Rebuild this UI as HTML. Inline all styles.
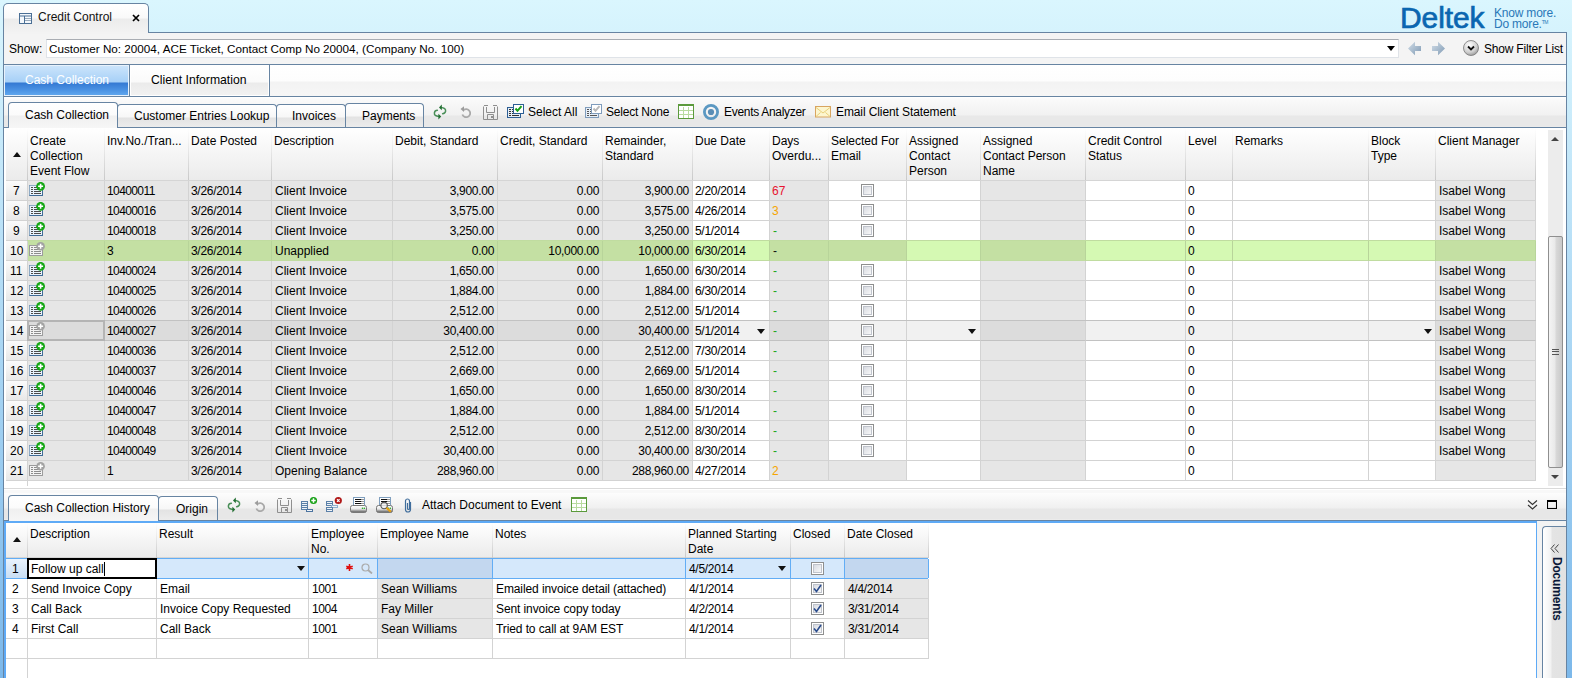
<!DOCTYPE html><html><head><meta charset="utf-8"><style>
html,body{margin:0;padding:0;}
body{width:1572px;height:678px;overflow:hidden;position:relative;font-family:"Liberation Sans",sans-serif;font-size:12px;color:#000;
background:linear-gradient(to bottom,#daf6fe 0px,#7cb8ea 678px);}
.t{position:absolute;white-space:nowrap;line-height:14px;height:14px;}
div{box-sizing:border-box;}
</style></head><body>
<div style="position:absolute;left:3px;top:3px;width:146px;height:31px;border:1px solid #6784a2;border-bottom:none;border-radius:5px 5px 0 0;background:linear-gradient(to bottom,#ffffff 0px,#f9f9f9 14px,#ececec 15px,#f3f3f3 29px);"></div>
<svg style="position:absolute;left:19px;top:13px" width="13" height="11" viewBox="0 0 13 11"><rect x="0.5" y="0.5" width="12" height="10" fill="#f4f8fc" stroke="#4a6f95"/><line x1="1" y1="3" x2="12" y2="3" stroke="#4a6f95"/><line x1="5.5" y1="3" x2="5.5" y2="10" stroke="#4a6f95"/><line x1="6" y1="5.5" x2="12" y2="5.5" stroke="#9ab"/><line x1="6" y1="7.5" x2="12" y2="7.5" stroke="#9ab"/></svg>
<div class="t" style="left:38px;top:10px;font-size:12px;color:#111">Credit Control</div>
<svg style="position:absolute;left:132px;top:14px" width="8" height="8" viewBox="0 0 8 8"><path d="M1 1L7 7M7 1L1 7" stroke="#000" stroke-width="1.7"/></svg>
<div class="t" style="left:1400px;top:1px;font-size:30px;line-height:34px;height:34px;color:#0b66b0;letter-spacing:-0.1px;font-weight:normal;-webkit-text-stroke:0.7px #0b66b0;">Deltek</div>
<div class="t" style="left:1494px;top:7px;font-size:12px;line-height:12px;height:12px;color:#2a78b8;letter-spacing:-0.2px">Know more.</div>
<div class="t" style="left:1494px;top:18px;font-size:12px;line-height:12px;height:12px;color:#2a78b8;letter-spacing:-0.2px">Do more.<span style="font-size:5px;letter-spacing:-0.5px;vertical-align:top;line-height:8px">TM</span></div>
<div style="position:absolute;left:3px;top:32px;width:1564px;height:660px;border:1px solid #6784a2;border-bottom:none;background:#f4f4f4;"></div>
<div style="position:absolute;left:4px;top:32px;width:144px;height:2px;background:#f3f3f3;"></div>
<div class="t" style="left:9px;top:42px;">Show:</div>
<div style="position:absolute;left:46px;top:39px;width:1353px;height:19px;background:#fff;border:1px solid #dfe3e8;border-top-color:#a9adb3;"></div>
<div class="t" style="left:49px;top:42px;font-size:11.7px">Customer No: 20004, ACE Ticket, Contact Comp No 20004, (Company No. 100)</div>
<svg style="position:absolute;left:1387px;top:46px" width="8" height="5"><path d="M0 0H8L4 5Z" fill="#000"/></svg>
<svg style="position:absolute;left:1408px;top:41px" width="14" height="15" viewBox="0 0 14 15"><defs><linearGradient id="ga" x1="0" y1="0" x2="1" y2="1"><stop offset="0" stop-color="#d3dee8"/><stop offset="1" stop-color="#7f9ab4"/></linearGradient></defs><path d="M0 7.5L7 0.7V5H13V10H7V14.3Z" fill="url(#ga)"/></svg>
<svg style="position:absolute;left:1431px;top:41px" width="14" height="15" viewBox="0 0 14 15"><path d="M14 7.5L7 0.7V5H1V10H7V14.3Z" fill="url(#ga)"/></svg>
<svg style="position:absolute;left:1463px;top:40px" width="17" height="17" viewBox="0 0 17 17"><defs><radialGradient id="gc" cx="0.4" cy="0.3" r="0.8"><stop offset="0" stop-color="#ffffff"/><stop offset="0.6" stop-color="#d0d0d0"/><stop offset="1" stop-color="#8a8a8a"/></radialGradient></defs><circle cx="8" cy="8" r="7.5" fill="url(#gc)" stroke="#777" stroke-width="0.8"/><path d="M5 6.5L8 9.5L11 6.5" fill="none" stroke="#111" stroke-width="1.8"/></svg>
<div class="t" style="left:1484px;top:42px;letter-spacing:-0.2px">Show Filter List</div>
<div style="position:absolute;left:4px;top:64px;width:1562px;height:1px;background:#6784a2;"></div>
<div style="position:absolute;left:4px;top:65px;width:1562px;height:31px;background:linear-gradient(to bottom,#ffffff 0px,#fdfdfd 16px,#f3f3f3 17px,#f6f6f6 30px);"></div>
<div style="position:absolute;left:4px;top:65px;width:125px;height:31px;background:linear-gradient(to bottom,#cbe4fb 0px,#a6d0f7 16px,#3479d3 17px,#4a92e3 24px,#62aaf0 30px);border:1px solid #e8f2fc;"></div>
<div class="t" style="left:25px;top:73px;color:#fff">Cash Collection</div>
<div style="position:absolute;left:129px;top:65px;width:1px;height:31px;background:#6784a2;"></div>
<div style="position:absolute;left:130px;top:65px;width:139px;height:31px;background:linear-gradient(to bottom,#ffffff 0px,#fafafa 16px,#ebebeb 17px,#f2f2f2 30px);border:1px solid #fff;"></div>
<div class="t" style="left:151px;top:73px;font-size:12.2px">Client Information</div>
<div style="position:absolute;left:269px;top:65px;width:1px;height:31px;background:#6784a2;"></div>
<div style="position:absolute;left:4px;top:96px;width:1562px;height:1px;background:#6784a2;"></div>
<div style="position:absolute;left:4px;top:97px;width:1562px;height:30px;background:linear-gradient(to bottom,#ffffff 0px,#fafafa 2px,#f1f1f1 18px,#e8e8e8 19px,#e8e8e8 29px,#ececec 30px);"></div>
<div style="position:absolute;left:4px;top:127px;width:1562px;height:1px;background:#6784a2;"></div>
<div style="position:absolute;left:345px;top:103px;width:79px;height:24px;border:1px solid #6784a2;border-bottom:none;border-radius:4px 4px 0 0;background:linear-gradient(to bottom,#ffffff 0px,#f7f7f7 12px,#e3e3e3 13px,#ececec 100%);"></div>
<div class="t" style="left:362px;top:109px;">Payments</div>
<div style="position:absolute;left:276px;top:104px;width:70px;height:23px;border:1px solid #6784a2;border-bottom:none;border-radius:4px 4px 0 0;background:linear-gradient(to bottom,#ffffff 0px,#f7f7f7 12px,#e3e3e3 13px,#ececec 100%);"></div>
<div class="t" style="left:292px;top:109px;">Invoices</div>
<div style="position:absolute;left:117px;top:104px;width:160px;height:23px;border:1px solid #6784a2;border-bottom:none;border-radius:4px 4px 0 0;background:linear-gradient(to bottom,#ffffff 0px,#f7f7f7 12px,#e3e3e3 13px,#ececec 100%);"></div>
<div class="t" style="left:134px;top:109px;">Customer Entries Lookup</div>
<div style="position:absolute;left:8px;top:102px;width:110px;height:26px;border:1px solid #6784a2;border-bottom:none;border-radius:4px 4px 0 0;background:linear-gradient(to bottom,#ffffff 0px,#fbfbfb 12px,#f0f0f0 13px,#f6f6f6 100%);"></div>
<div class="t" style="left:25px;top:108px;">Cash Collection</div>
<svg style="position:absolute;left:430px;top:102px" width="20" height="20" viewBox="0 0 20 20"><g fill="none" stroke="#2a7d3c" stroke-width="1.5" stroke-linecap="round"><path d="M11 5.5 Q16 5.8 15.6 9.2 Q15.2 11.6 12.6 11.7" stroke-opacity="0.85"/><path d="M9 14.5 Q4 14.2 4.4 10.8 Q4.8 8.4 7.4 8.3" stroke-opacity="0.85"/></g><path d="M9 5.4L11.8 2.6V8.2Z" fill="#236f33"/><path d="M11.2 14.6L8.4 11.8V17.4Z" fill="#236f33"/></svg>
<svg style="position:absolute;left:460px;top:106px" width="11" height="12" viewBox="0 0 11 12"><path d="M3.5 4.2 A4 4 0 1 1 2.4 8.5" fill="none" stroke="#a9a9a9" stroke-width="1.8"/><path d="M0.5 3L4 0.3V6Z" fill="#9c9c9c"/></svg>
<svg style="position:absolute;left:483px;top:105px" width="16" height="16" viewBox="0 0 16 16"><g fill="none" stroke="#8f8f8f" stroke-width="1"><path d="M0.5 1.5V14.5H14.5V1.5"/><path d="M1 0.5H5M10 0.5H14"/><path d="M3.5 2V7.5H11.5V2"/><path d="M4.5 14V9.5H10.5V14"/></g><rect x="8" y="11" width="2" height="2" fill="#8f8f8f"/></svg>
<svg style="position:absolute;left:507px;top:104px" width="17" height="15" viewBox="0 0 17 15"><rect x="0.5" y="3.5" width="13" height="10" fill="#e6eef7" stroke="#2d5f94"/><g stroke="#333" stroke-width="1"><path d="M2 5.5H4M2 7.5H4M2 9.5H4M2 11.5H4M5 5.5H12M5 7.5H12M5 9.5H12M5 11.5H12"/></g><rect x="6.5" y="0.5" width="10" height="9" fill="#fff" stroke="#2d5f94"/><path d="M8.5 4.5L10.5 6.8L14.5 2.2" fill="none" stroke="#17a017" stroke-width="2"/></svg>
<div class="t" style="left:528px;top:105px;">Select All</div>
<svg style="position:absolute;left:585px;top:104px" width="17" height="15" viewBox="0 0 17 15"><rect x="0.5" y="3.5" width="13" height="10" fill="#e6eef7" stroke="#7f9cbc"/><g stroke="#555" stroke-width="1"><path d="M2 5.5H4M2 7.5H4M2 9.5H4M2 11.5H4M5 5.5H12M5 7.5H12M5 9.5H12M5 11.5H12"/></g><rect x="6.5" y="0.5" width="10" height="9" fill="#fff" stroke="#7f9cbc"/><path d="M8.5 4.5L10.5 6.8L14.5 2.2" fill="none" stroke="#b9b9b9" stroke-width="2"/></svg>
<div class="t" style="left:606px;top:105px;letter-spacing:-0.2px">Select None</div>
<svg style="position:absolute;left:678px;top:104px" width="16" height="15" viewBox="0 0 16 15"><rect x="0.5" y="0.5" width="15" height="14" fill="#fff" stroke="#5b9a3c"/><rect x="1" y="1" width="14" height="1" fill="#5b9a3c"/><g stroke="#b9dba0" stroke-width="1"><path d="M5.5 3V14M10.5 3V14M1 6.5H15M1 10.5H15"/></g></svg>
<svg style="position:absolute;left:703px;top:104px" width="16" height="16" viewBox="0 0 16 16"><circle cx="8" cy="8" r="6.6" fill="none" stroke="#5b98c2" stroke-width="2.8"/><circle cx="8" cy="8" r="3.1" fill="#5a8db5"/></svg>
<div class="t" style="left:724px;top:105px;letter-spacing:-0.3px">Events Analyzer</div>
<svg style="position:absolute;left:815px;top:106px" width="16" height="12" viewBox="0 0 16 12"><rect x="0.5" y="0.5" width="15" height="10.5" fill="#fdf6cf" stroke="#d8a560"/><path d="M1 1.5L8 7L15 1.5M1 10.5L5.5 6.5M15 10.5L10.5 6.5" fill="none" stroke="#e8cf7a" stroke-width="1"/></svg>
<div class="t" style="left:836px;top:105px;letter-spacing:-0.1px">Email Client Statement</div>
<div style="position:absolute;left:4px;top:128px;width:1562px;height:361px;background:#fff;"></div>
<div style="position:absolute;left:6px;top:128px;width:1530px;height:53px;background:linear-gradient(to bottom,#ffffff,#ebebeb);border-bottom:1px solid #d5d5d5;"></div>
<div style="position:absolute;left:27px;top:128px;width:1px;height:52px;background:linear-gradient(to bottom,#ffffff,#c9c9c9);"></div>
<div style="position:absolute;left:104px;top:128px;width:1px;height:52px;background:linear-gradient(to bottom,#ffffff,#c9c9c9);"></div>
<div style="position:absolute;left:188px;top:128px;width:1px;height:52px;background:linear-gradient(to bottom,#ffffff,#c9c9c9);"></div>
<div style="position:absolute;left:271px;top:128px;width:1px;height:52px;background:linear-gradient(to bottom,#ffffff,#c9c9c9);"></div>
<div style="position:absolute;left:392px;top:128px;width:1px;height:52px;background:linear-gradient(to bottom,#ffffff,#c9c9c9);"></div>
<div style="position:absolute;left:497px;top:128px;width:1px;height:52px;background:linear-gradient(to bottom,#ffffff,#c9c9c9);"></div>
<div style="position:absolute;left:602px;top:128px;width:1px;height:52px;background:linear-gradient(to bottom,#ffffff,#c9c9c9);"></div>
<div style="position:absolute;left:692px;top:128px;width:1px;height:52px;background:linear-gradient(to bottom,#ffffff,#c9c9c9);"></div>
<div style="position:absolute;left:769px;top:128px;width:1px;height:52px;background:linear-gradient(to bottom,#ffffff,#c9c9c9);"></div>
<div style="position:absolute;left:828px;top:128px;width:1px;height:52px;background:linear-gradient(to bottom,#ffffff,#c9c9c9);"></div>
<div style="position:absolute;left:906px;top:128px;width:1px;height:52px;background:linear-gradient(to bottom,#ffffff,#c9c9c9);"></div>
<div style="position:absolute;left:980px;top:128px;width:1px;height:52px;background:linear-gradient(to bottom,#ffffff,#c9c9c9);"></div>
<div style="position:absolute;left:1085px;top:128px;width:1px;height:52px;background:linear-gradient(to bottom,#ffffff,#c9c9c9);"></div>
<div style="position:absolute;left:1185px;top:128px;width:1px;height:52px;background:linear-gradient(to bottom,#ffffff,#c9c9c9);"></div>
<div style="position:absolute;left:1232px;top:128px;width:1px;height:52px;background:linear-gradient(to bottom,#ffffff,#c9c9c9);"></div>
<div style="position:absolute;left:1368px;top:128px;width:1px;height:52px;background:linear-gradient(to bottom,#ffffff,#c9c9c9);"></div>
<div style="position:absolute;left:1435px;top:128px;width:1px;height:52px;background:linear-gradient(to bottom,#ffffff,#c9c9c9);"></div>
<div style="position:absolute;left:1535px;top:128px;width:1px;height:52px;background:linear-gradient(to bottom,#ffffff,#c9c9c9);"></div>
<svg style="position:absolute;left:13px;top:152px" width="8" height="5" viewBox="0 0 8 5"><path d="M0 5L4 0L8 5Z" fill="#111"/></svg>
<div class="t" style="left:30px;top:134px;line-height:15px;height:45px">Create<br>Collection<br>Event Flow</div>
<div class="t" style="left:107px;top:134px;line-height:15px;height:45px">Inv.No./Tran...</div>
<div class="t" style="left:191px;top:134px;line-height:15px;height:45px">Date Posted</div>
<div class="t" style="left:274px;top:134px;line-height:15px;height:45px">Description</div>
<div class="t" style="left:395px;top:134px;line-height:15px;height:45px">Debit, Standard</div>
<div class="t" style="left:500px;top:134px;line-height:15px;height:45px">Credit, Standard</div>
<div class="t" style="left:605px;top:134px;line-height:15px;height:45px">Remainder,<br>Standard</div>
<div class="t" style="left:695px;top:134px;line-height:15px;height:45px">Due Date</div>
<div class="t" style="left:772px;top:134px;line-height:15px;height:45px">Days<br>Overdu...</div>
<div class="t" style="left:831px;top:134px;line-height:15px;height:45px">Selected For<br>Email</div>
<div class="t" style="left:909px;top:134px;line-height:15px;height:45px">Assigned<br>Contact<br>Person</div>
<div class="t" style="left:983px;top:134px;line-height:15px;height:45px">Assigned<br>Contact Person<br>Name</div>
<div class="t" style="left:1088px;top:134px;line-height:15px;height:45px">Credit Control<br>Status</div>
<div class="t" style="left:1188px;top:134px;line-height:15px;height:45px">Level</div>
<div class="t" style="left:1235px;top:134px;line-height:15px;height:45px">Remarks</div>
<div class="t" style="left:1371px;top:134px;line-height:15px;height:45px">Block<br>Type</div>
<div class="t" style="left:1438px;top:134px;line-height:15px;height:45px">Client Manager</div>
<div style="position:absolute;left:6px;top:181px;width:21px;height:20px;background:linear-gradient(to bottom,#fbfbfb,#e8e8e8);border-bottom:1px solid #d3d3d3;"></div>
<div style="position:absolute;left:27px;top:181px;width:1px;height:20px;background:#d3d3d3;"></div>
<div class="t" style="left:13px;top:184px;">7</div>
<div style="position:absolute;left:28px;top:181px;width:77px;height:20px;background:#e6e6e6;border-right:1px solid #d3d3d3;border-bottom:1px solid #d3d3d3;"></div>
<div style="position:absolute;left:105px;top:181px;width:84px;height:20px;background:#e6e6e6;border-right:1px solid #d3d3d3;border-bottom:1px solid #d3d3d3;"></div>
<div style="position:absolute;left:189px;top:181px;width:83px;height:20px;background:#e6e6e6;border-right:1px solid #d3d3d3;border-bottom:1px solid #d3d3d3;"></div>
<div style="position:absolute;left:272px;top:181px;width:121px;height:20px;background:#e6e6e6;border-right:1px solid #d3d3d3;border-bottom:1px solid #d3d3d3;"></div>
<div style="position:absolute;left:393px;top:181px;width:105px;height:20px;background:#e6e6e6;border-right:1px solid #d3d3d3;border-bottom:1px solid #d3d3d3;"></div>
<div style="position:absolute;left:498px;top:181px;width:105px;height:20px;background:#e6e6e6;border-right:1px solid #d3d3d3;border-bottom:1px solid #d3d3d3;"></div>
<div style="position:absolute;left:603px;top:181px;width:90px;height:20px;background:#e6e6e6;border-right:1px solid #d3d3d3;border-bottom:1px solid #d3d3d3;"></div>
<div style="position:absolute;left:693px;top:181px;width:77px;height:20px;background:#ffffff;border-right:1px solid #d3d3d3;border-bottom:1px solid #d3d3d3;"></div>
<div style="position:absolute;left:770px;top:181px;width:59px;height:20px;background:#e6e6e6;border-right:1px solid #d3d3d3;border-bottom:1px solid #d3d3d3;"></div>
<div style="position:absolute;left:829px;top:181px;width:78px;height:20px;background:#ffffff;border-right:1px solid #d3d3d3;border-bottom:1px solid #d3d3d3;"></div>
<div style="position:absolute;left:907px;top:181px;width:74px;height:20px;background:#ffffff;border-right:1px solid #d3d3d3;border-bottom:1px solid #d3d3d3;"></div>
<div style="position:absolute;left:981px;top:181px;width:105px;height:20px;background:#e6e6e6;border-right:1px solid #d3d3d3;border-bottom:1px solid #d3d3d3;"></div>
<div style="position:absolute;left:1086px;top:181px;width:100px;height:20px;background:#ffffff;border-right:1px solid #d3d3d3;border-bottom:1px solid #d3d3d3;"></div>
<div style="position:absolute;left:1186px;top:181px;width:47px;height:20px;background:#ffffff;border-right:1px solid #d3d3d3;border-bottom:1px solid #d3d3d3;"></div>
<div style="position:absolute;left:1233px;top:181px;width:136px;height:20px;background:#ffffff;border-right:1px solid #d3d3d3;border-bottom:1px solid #d3d3d3;"></div>
<div style="position:absolute;left:1369px;top:181px;width:67px;height:20px;background:#ffffff;border-right:1px solid #d3d3d3;border-bottom:1px solid #d3d3d3;"></div>
<div style="position:absolute;left:1436px;top:181px;width:100px;height:20px;background:#e6e6e6;border-right:1px solid #d3d3d3;border-bottom:1px solid #d3d3d3;"></div>
<svg style="position:absolute;left:29px;top:182px" width="17" height="15" viewBox="0 0 17 15"><rect x="0.5" y="3.5" width="13" height="10" fill="#e8f2fc" stroke="#3f6b95"/><path d="M0.5 13.5V3.5H13.5" fill="none" stroke="#8eaac4"/><g stroke="#4a4a4a"><path d="M2 5.5H4M2 7.5H4M2 9.5H4M2 11.5H4M5 5.5H12M5 7.5H12M5 9.5H12M5 11.5H12"/></g><circle cx="11.6" cy="4.3" r="4.4" fill="#13a713"/><path d="M11.6 1.8V6.8M9.1 4.3H14.1" stroke="#fff" stroke-width="1.6"/></svg>
<div class="t" style="left:107px;top:184px;letter-spacing:-0.6px">10400011</div>
<div class="t" style="left:191px;top:184px;letter-spacing:-0.3px">3/26/2014</div>
<div class="t" style="left:275px;top:184px;">Client Invoice</div>
<div class="t" style="right:1078px;top:184px;letter-spacing:-0.3px">3,900.00</div>
<div class="t" style="right:973px;top:184px;letter-spacing:-0.3px">0.00</div>
<div class="t" style="right:883px;top:184px;letter-spacing:-0.3px">3,900.00</div>
<div class="t" style="left:695px;top:184px;letter-spacing:-0.3px">2/20/2014</div>
<div class="t" style="left:772px;top:184px;color:#e8132f">67</div>
<div style="position:absolute;left:861px;top:184px;width:13px;height:13px;border:1px solid #8e8f8f;background:#fff;"><div style="position:absolute;left:1px;top:1px;width:9px;height:9px;border:1px solid #c0c4cc;background:linear-gradient(135deg,#d8dbe2,#f8f8f8);"></div></div>
<div class="t" style="left:1188px;top:184px;">0</div>
<div class="t" style="left:1439px;top:184px;">Isabel Wong</div>
<div style="position:absolute;left:6px;top:201px;width:21px;height:20px;background:linear-gradient(to bottom,#fbfbfb,#e8e8e8);border-bottom:1px solid #d3d3d3;"></div>
<div style="position:absolute;left:27px;top:201px;width:1px;height:20px;background:#d3d3d3;"></div>
<div class="t" style="left:13px;top:204px;">8</div>
<div style="position:absolute;left:28px;top:201px;width:77px;height:20px;background:#e6e6e6;border-right:1px solid #d3d3d3;border-bottom:1px solid #d3d3d3;"></div>
<div style="position:absolute;left:105px;top:201px;width:84px;height:20px;background:#e6e6e6;border-right:1px solid #d3d3d3;border-bottom:1px solid #d3d3d3;"></div>
<div style="position:absolute;left:189px;top:201px;width:83px;height:20px;background:#e6e6e6;border-right:1px solid #d3d3d3;border-bottom:1px solid #d3d3d3;"></div>
<div style="position:absolute;left:272px;top:201px;width:121px;height:20px;background:#e6e6e6;border-right:1px solid #d3d3d3;border-bottom:1px solid #d3d3d3;"></div>
<div style="position:absolute;left:393px;top:201px;width:105px;height:20px;background:#e6e6e6;border-right:1px solid #d3d3d3;border-bottom:1px solid #d3d3d3;"></div>
<div style="position:absolute;left:498px;top:201px;width:105px;height:20px;background:#e6e6e6;border-right:1px solid #d3d3d3;border-bottom:1px solid #d3d3d3;"></div>
<div style="position:absolute;left:603px;top:201px;width:90px;height:20px;background:#e6e6e6;border-right:1px solid #d3d3d3;border-bottom:1px solid #d3d3d3;"></div>
<div style="position:absolute;left:693px;top:201px;width:77px;height:20px;background:#ffffff;border-right:1px solid #d3d3d3;border-bottom:1px solid #d3d3d3;"></div>
<div style="position:absolute;left:770px;top:201px;width:59px;height:20px;background:#e6e6e6;border-right:1px solid #d3d3d3;border-bottom:1px solid #d3d3d3;"></div>
<div style="position:absolute;left:829px;top:201px;width:78px;height:20px;background:#ffffff;border-right:1px solid #d3d3d3;border-bottom:1px solid #d3d3d3;"></div>
<div style="position:absolute;left:907px;top:201px;width:74px;height:20px;background:#ffffff;border-right:1px solid #d3d3d3;border-bottom:1px solid #d3d3d3;"></div>
<div style="position:absolute;left:981px;top:201px;width:105px;height:20px;background:#e6e6e6;border-right:1px solid #d3d3d3;border-bottom:1px solid #d3d3d3;"></div>
<div style="position:absolute;left:1086px;top:201px;width:100px;height:20px;background:#ffffff;border-right:1px solid #d3d3d3;border-bottom:1px solid #d3d3d3;"></div>
<div style="position:absolute;left:1186px;top:201px;width:47px;height:20px;background:#ffffff;border-right:1px solid #d3d3d3;border-bottom:1px solid #d3d3d3;"></div>
<div style="position:absolute;left:1233px;top:201px;width:136px;height:20px;background:#ffffff;border-right:1px solid #d3d3d3;border-bottom:1px solid #d3d3d3;"></div>
<div style="position:absolute;left:1369px;top:201px;width:67px;height:20px;background:#ffffff;border-right:1px solid #d3d3d3;border-bottom:1px solid #d3d3d3;"></div>
<div style="position:absolute;left:1436px;top:201px;width:100px;height:20px;background:#e6e6e6;border-right:1px solid #d3d3d3;border-bottom:1px solid #d3d3d3;"></div>
<svg style="position:absolute;left:29px;top:202px" width="17" height="15" viewBox="0 0 17 15"><rect x="0.5" y="3.5" width="13" height="10" fill="#e8f2fc" stroke="#3f6b95"/><path d="M0.5 13.5V3.5H13.5" fill="none" stroke="#8eaac4"/><g stroke="#4a4a4a"><path d="M2 5.5H4M2 7.5H4M2 9.5H4M2 11.5H4M5 5.5H12M5 7.5H12M5 9.5H12M5 11.5H12"/></g><circle cx="11.6" cy="4.3" r="4.4" fill="#13a713"/><path d="M11.6 1.8V6.8M9.1 4.3H14.1" stroke="#fff" stroke-width="1.6"/></svg>
<div class="t" style="left:107px;top:204px;letter-spacing:-0.6px">10400016</div>
<div class="t" style="left:191px;top:204px;letter-spacing:-0.3px">3/26/2014</div>
<div class="t" style="left:275px;top:204px;">Client Invoice</div>
<div class="t" style="right:1078px;top:204px;letter-spacing:-0.3px">3,575.00</div>
<div class="t" style="right:973px;top:204px;letter-spacing:-0.3px">0.00</div>
<div class="t" style="right:883px;top:204px;letter-spacing:-0.3px">3,575.00</div>
<div class="t" style="left:695px;top:204px;letter-spacing:-0.3px">4/26/2014</div>
<div class="t" style="left:772px;top:204px;color:#f5a500">3</div>
<div style="position:absolute;left:861px;top:204px;width:13px;height:13px;border:1px solid #8e8f8f;background:#fff;"><div style="position:absolute;left:1px;top:1px;width:9px;height:9px;border:1px solid #c0c4cc;background:linear-gradient(135deg,#d8dbe2,#f8f8f8);"></div></div>
<div class="t" style="left:1188px;top:204px;">0</div>
<div class="t" style="left:1439px;top:204px;">Isabel Wong</div>
<div style="position:absolute;left:6px;top:221px;width:21px;height:20px;background:linear-gradient(to bottom,#fbfbfb,#e8e8e8);border-bottom:1px solid #d3d3d3;"></div>
<div style="position:absolute;left:27px;top:221px;width:1px;height:20px;background:#d3d3d3;"></div>
<div class="t" style="left:13px;top:224px;">9</div>
<div style="position:absolute;left:28px;top:221px;width:77px;height:20px;background:#e6e6e6;border-right:1px solid #d3d3d3;border-bottom:1px solid #d3d3d3;"></div>
<div style="position:absolute;left:105px;top:221px;width:84px;height:20px;background:#e6e6e6;border-right:1px solid #d3d3d3;border-bottom:1px solid #d3d3d3;"></div>
<div style="position:absolute;left:189px;top:221px;width:83px;height:20px;background:#e6e6e6;border-right:1px solid #d3d3d3;border-bottom:1px solid #d3d3d3;"></div>
<div style="position:absolute;left:272px;top:221px;width:121px;height:20px;background:#e6e6e6;border-right:1px solid #d3d3d3;border-bottom:1px solid #d3d3d3;"></div>
<div style="position:absolute;left:393px;top:221px;width:105px;height:20px;background:#e6e6e6;border-right:1px solid #d3d3d3;border-bottom:1px solid #d3d3d3;"></div>
<div style="position:absolute;left:498px;top:221px;width:105px;height:20px;background:#e6e6e6;border-right:1px solid #d3d3d3;border-bottom:1px solid #d3d3d3;"></div>
<div style="position:absolute;left:603px;top:221px;width:90px;height:20px;background:#e6e6e6;border-right:1px solid #d3d3d3;border-bottom:1px solid #d3d3d3;"></div>
<div style="position:absolute;left:693px;top:221px;width:77px;height:20px;background:#ffffff;border-right:1px solid #d3d3d3;border-bottom:1px solid #d3d3d3;"></div>
<div style="position:absolute;left:770px;top:221px;width:59px;height:20px;background:#e6e6e6;border-right:1px solid #d3d3d3;border-bottom:1px solid #d3d3d3;"></div>
<div style="position:absolute;left:829px;top:221px;width:78px;height:20px;background:#ffffff;border-right:1px solid #d3d3d3;border-bottom:1px solid #d3d3d3;"></div>
<div style="position:absolute;left:907px;top:221px;width:74px;height:20px;background:#ffffff;border-right:1px solid #d3d3d3;border-bottom:1px solid #d3d3d3;"></div>
<div style="position:absolute;left:981px;top:221px;width:105px;height:20px;background:#e6e6e6;border-right:1px solid #d3d3d3;border-bottom:1px solid #d3d3d3;"></div>
<div style="position:absolute;left:1086px;top:221px;width:100px;height:20px;background:#ffffff;border-right:1px solid #d3d3d3;border-bottom:1px solid #d3d3d3;"></div>
<div style="position:absolute;left:1186px;top:221px;width:47px;height:20px;background:#ffffff;border-right:1px solid #d3d3d3;border-bottom:1px solid #d3d3d3;"></div>
<div style="position:absolute;left:1233px;top:221px;width:136px;height:20px;background:#ffffff;border-right:1px solid #d3d3d3;border-bottom:1px solid #d3d3d3;"></div>
<div style="position:absolute;left:1369px;top:221px;width:67px;height:20px;background:#ffffff;border-right:1px solid #d3d3d3;border-bottom:1px solid #d3d3d3;"></div>
<div style="position:absolute;left:1436px;top:221px;width:100px;height:20px;background:#e6e6e6;border-right:1px solid #d3d3d3;border-bottom:1px solid #d3d3d3;"></div>
<svg style="position:absolute;left:29px;top:222px" width="17" height="15" viewBox="0 0 17 15"><rect x="0.5" y="3.5" width="13" height="10" fill="#e8f2fc" stroke="#3f6b95"/><path d="M0.5 13.5V3.5H13.5" fill="none" stroke="#8eaac4"/><g stroke="#4a4a4a"><path d="M2 5.5H4M2 7.5H4M2 9.5H4M2 11.5H4M5 5.5H12M5 7.5H12M5 9.5H12M5 11.5H12"/></g><circle cx="11.6" cy="4.3" r="4.4" fill="#13a713"/><path d="M11.6 1.8V6.8M9.1 4.3H14.1" stroke="#fff" stroke-width="1.6"/></svg>
<div class="t" style="left:107px;top:224px;letter-spacing:-0.6px">10400018</div>
<div class="t" style="left:191px;top:224px;letter-spacing:-0.3px">3/26/2014</div>
<div class="t" style="left:275px;top:224px;">Client Invoice</div>
<div class="t" style="right:1078px;top:224px;letter-spacing:-0.3px">3,250.00</div>
<div class="t" style="right:973px;top:224px;letter-spacing:-0.3px">0.00</div>
<div class="t" style="right:883px;top:224px;letter-spacing:-0.3px">3,250.00</div>
<div class="t" style="left:695px;top:224px;letter-spacing:-0.3px">5/1/2014</div>
<div class="t" style="left:773px;top:224px;color:#1aa51a">-</div>
<div style="position:absolute;left:861px;top:224px;width:13px;height:13px;border:1px solid #8e8f8f;background:#fff;"><div style="position:absolute;left:1px;top:1px;width:9px;height:9px;border:1px solid #c0c4cc;background:linear-gradient(135deg,#d8dbe2,#f8f8f8);"></div></div>
<div class="t" style="left:1188px;top:224px;">0</div>
<div class="t" style="left:1439px;top:224px;">Isabel Wong</div>
<div style="position:absolute;left:6px;top:241px;width:21px;height:20px;background:linear-gradient(to bottom,#fbfbfb,#e8e8e8);border-bottom:1px solid #d3d3d3;"></div>
<div style="position:absolute;left:27px;top:241px;width:1px;height:20px;background:#d3d3d3;"></div>
<div class="t" style="left:10px;top:244px;">10</div>
<div style="position:absolute;left:28px;top:241px;width:77px;height:20px;background:#c4e0a3;border-right:1px solid #b8d49a;border-bottom:1px solid #c0dca0;"></div>
<div style="position:absolute;left:27px;top:240px;width:78px;height:1px;background:#c0dca0;"></div>
<div style="position:absolute;left:105px;top:241px;width:84px;height:20px;background:#c4e0a3;border-right:1px solid #b8d49a;border-bottom:1px solid #c0dca0;"></div>
<div style="position:absolute;left:104px;top:240px;width:85px;height:1px;background:#c0dca0;"></div>
<div style="position:absolute;left:189px;top:241px;width:83px;height:20px;background:#c4e0a3;border-right:1px solid #b8d49a;border-bottom:1px solid #c0dca0;"></div>
<div style="position:absolute;left:188px;top:240px;width:84px;height:1px;background:#c0dca0;"></div>
<div style="position:absolute;left:272px;top:241px;width:121px;height:20px;background:#c4e0a3;border-right:1px solid #b8d49a;border-bottom:1px solid #c0dca0;"></div>
<div style="position:absolute;left:271px;top:240px;width:122px;height:1px;background:#c0dca0;"></div>
<div style="position:absolute;left:393px;top:241px;width:105px;height:20px;background:#c4e0a3;border-right:1px solid #b8d49a;border-bottom:1px solid #c0dca0;"></div>
<div style="position:absolute;left:392px;top:240px;width:106px;height:1px;background:#c0dca0;"></div>
<div style="position:absolute;left:498px;top:241px;width:105px;height:20px;background:#c4e0a3;border-right:1px solid #b8d49a;border-bottom:1px solid #c0dca0;"></div>
<div style="position:absolute;left:497px;top:240px;width:106px;height:1px;background:#c0dca0;"></div>
<div style="position:absolute;left:603px;top:241px;width:90px;height:20px;background:#c4e0a3;border-right:1px solid #b8d49a;border-bottom:1px solid #c0dca0;"></div>
<div style="position:absolute;left:602px;top:240px;width:91px;height:1px;background:#c0dca0;"></div>
<div style="position:absolute;left:693px;top:241px;width:77px;height:20px;background:#d5f9b3;border-right:1px solid #b8d49a;border-bottom:1px solid #c0dca0;"></div>
<div style="position:absolute;left:692px;top:240px;width:78px;height:1px;background:#c0dca0;"></div>
<div style="position:absolute;left:770px;top:241px;width:59px;height:20px;background:#c4e0a3;border-right:1px solid #b8d49a;border-bottom:1px solid #c0dca0;"></div>
<div style="position:absolute;left:769px;top:240px;width:60px;height:1px;background:#c0dca0;"></div>
<div style="position:absolute;left:829px;top:241px;width:78px;height:20px;background:#c4e0a3;border-right:1px solid #b8d49a;border-bottom:1px solid #c0dca0;"></div>
<div style="position:absolute;left:828px;top:240px;width:79px;height:1px;background:#c0dca0;"></div>
<div style="position:absolute;left:907px;top:241px;width:74px;height:20px;background:#d5f9b3;border-right:1px solid #b8d49a;border-bottom:1px solid #c0dca0;"></div>
<div style="position:absolute;left:906px;top:240px;width:75px;height:1px;background:#c0dca0;"></div>
<div style="position:absolute;left:981px;top:241px;width:105px;height:20px;background:#c4e0a3;border-right:1px solid #b8d49a;border-bottom:1px solid #c0dca0;"></div>
<div style="position:absolute;left:980px;top:240px;width:106px;height:1px;background:#c0dca0;"></div>
<div style="position:absolute;left:1086px;top:241px;width:100px;height:20px;background:#d5f9b3;border-right:1px solid #b8d49a;border-bottom:1px solid #c0dca0;"></div>
<div style="position:absolute;left:1085px;top:240px;width:101px;height:1px;background:#c0dca0;"></div>
<div style="position:absolute;left:1186px;top:241px;width:47px;height:20px;background:#d5f9b3;border-right:1px solid #b8d49a;border-bottom:1px solid #c0dca0;"></div>
<div style="position:absolute;left:1185px;top:240px;width:48px;height:1px;background:#c0dca0;"></div>
<div style="position:absolute;left:1233px;top:241px;width:136px;height:20px;background:#d5f9b3;border-right:1px solid #b8d49a;border-bottom:1px solid #c0dca0;"></div>
<div style="position:absolute;left:1232px;top:240px;width:137px;height:1px;background:#c0dca0;"></div>
<div style="position:absolute;left:1369px;top:241px;width:67px;height:20px;background:#d5f9b3;border-right:1px solid #b8d49a;border-bottom:1px solid #c0dca0;"></div>
<div style="position:absolute;left:1368px;top:240px;width:68px;height:1px;background:#c0dca0;"></div>
<div style="position:absolute;left:1436px;top:241px;width:100px;height:20px;background:#c4e0a3;border-right:1px solid #b8d49a;border-bottom:1px solid #c0dca0;"></div>
<div style="position:absolute;left:1435px;top:240px;width:101px;height:1px;background:#c0dca0;"></div>
<svg style="position:absolute;left:29px;top:242px" width="17" height="15" viewBox="0 0 17 15"><rect x="0.5" y="3.5" width="13" height="10" fill="#f3f3f3" stroke="#9c9c9c"/><g stroke="#8c8c8c"><path d="M2 5.5H4M2 7.5H4M2 9.5H4M2 11.5H4M5 5.5H12M5 7.5H12M5 9.5H12M5 11.5H12"/></g><circle cx="11.6" cy="4.3" r="4.3" fill="#a2a2a2"/><path d="M11.6 1.8V6.8M9.1 4.3H14.1" stroke="#fff" stroke-width="1.5"/></svg>
<div class="t" style="left:107px;top:244px;letter-spacing:-0.6px">3</div>
<div class="t" style="left:191px;top:244px;letter-spacing:-0.3px">3/26/2014</div>
<div class="t" style="left:275px;top:244px;">Unapplied</div>
<div class="t" style="right:1078px;top:244px;letter-spacing:-0.3px">0.00</div>
<div class="t" style="right:973px;top:244px;letter-spacing:-0.3px">10,000.00</div>
<div class="t" style="right:883px;top:244px;letter-spacing:-0.3px">10,000.00</div>
<div class="t" style="left:695px;top:244px;letter-spacing:-0.3px">6/30/2014</div>
<div class="t" style="left:773px;top:244px;color:#111">-</div>
<div class="t" style="left:1188px;top:244px;">0</div>
<div style="position:absolute;left:6px;top:261px;width:21px;height:20px;background:linear-gradient(to bottom,#fbfbfb,#e8e8e8);border-bottom:1px solid #d3d3d3;"></div>
<div style="position:absolute;left:27px;top:261px;width:1px;height:20px;background:#d3d3d3;"></div>
<div class="t" style="left:10px;top:264px;">11</div>
<div style="position:absolute;left:28px;top:261px;width:77px;height:20px;background:#e6e6e6;border-right:1px solid #d3d3d3;border-bottom:1px solid #d3d3d3;"></div>
<div style="position:absolute;left:105px;top:261px;width:84px;height:20px;background:#e6e6e6;border-right:1px solid #d3d3d3;border-bottom:1px solid #d3d3d3;"></div>
<div style="position:absolute;left:189px;top:261px;width:83px;height:20px;background:#e6e6e6;border-right:1px solid #d3d3d3;border-bottom:1px solid #d3d3d3;"></div>
<div style="position:absolute;left:272px;top:261px;width:121px;height:20px;background:#e6e6e6;border-right:1px solid #d3d3d3;border-bottom:1px solid #d3d3d3;"></div>
<div style="position:absolute;left:393px;top:261px;width:105px;height:20px;background:#e6e6e6;border-right:1px solid #d3d3d3;border-bottom:1px solid #d3d3d3;"></div>
<div style="position:absolute;left:498px;top:261px;width:105px;height:20px;background:#e6e6e6;border-right:1px solid #d3d3d3;border-bottom:1px solid #d3d3d3;"></div>
<div style="position:absolute;left:603px;top:261px;width:90px;height:20px;background:#e6e6e6;border-right:1px solid #d3d3d3;border-bottom:1px solid #d3d3d3;"></div>
<div style="position:absolute;left:693px;top:261px;width:77px;height:20px;background:#ffffff;border-right:1px solid #d3d3d3;border-bottom:1px solid #d3d3d3;"></div>
<div style="position:absolute;left:770px;top:261px;width:59px;height:20px;background:#e6e6e6;border-right:1px solid #d3d3d3;border-bottom:1px solid #d3d3d3;"></div>
<div style="position:absolute;left:829px;top:261px;width:78px;height:20px;background:#ffffff;border-right:1px solid #d3d3d3;border-bottom:1px solid #d3d3d3;"></div>
<div style="position:absolute;left:907px;top:261px;width:74px;height:20px;background:#ffffff;border-right:1px solid #d3d3d3;border-bottom:1px solid #d3d3d3;"></div>
<div style="position:absolute;left:981px;top:261px;width:105px;height:20px;background:#e6e6e6;border-right:1px solid #d3d3d3;border-bottom:1px solid #d3d3d3;"></div>
<div style="position:absolute;left:1086px;top:261px;width:100px;height:20px;background:#ffffff;border-right:1px solid #d3d3d3;border-bottom:1px solid #d3d3d3;"></div>
<div style="position:absolute;left:1186px;top:261px;width:47px;height:20px;background:#ffffff;border-right:1px solid #d3d3d3;border-bottom:1px solid #d3d3d3;"></div>
<div style="position:absolute;left:1233px;top:261px;width:136px;height:20px;background:#ffffff;border-right:1px solid #d3d3d3;border-bottom:1px solid #d3d3d3;"></div>
<div style="position:absolute;left:1369px;top:261px;width:67px;height:20px;background:#ffffff;border-right:1px solid #d3d3d3;border-bottom:1px solid #d3d3d3;"></div>
<div style="position:absolute;left:1436px;top:261px;width:100px;height:20px;background:#e6e6e6;border-right:1px solid #d3d3d3;border-bottom:1px solid #d3d3d3;"></div>
<svg style="position:absolute;left:29px;top:262px" width="17" height="15" viewBox="0 0 17 15"><rect x="0.5" y="3.5" width="13" height="10" fill="#e8f2fc" stroke="#3f6b95"/><path d="M0.5 13.5V3.5H13.5" fill="none" stroke="#8eaac4"/><g stroke="#4a4a4a"><path d="M2 5.5H4M2 7.5H4M2 9.5H4M2 11.5H4M5 5.5H12M5 7.5H12M5 9.5H12M5 11.5H12"/></g><circle cx="11.6" cy="4.3" r="4.4" fill="#13a713"/><path d="M11.6 1.8V6.8M9.1 4.3H14.1" stroke="#fff" stroke-width="1.6"/></svg>
<div class="t" style="left:107px;top:264px;letter-spacing:-0.6px">10400024</div>
<div class="t" style="left:191px;top:264px;letter-spacing:-0.3px">3/26/2014</div>
<div class="t" style="left:275px;top:264px;">Client Invoice</div>
<div class="t" style="right:1078px;top:264px;letter-spacing:-0.3px">1,650.00</div>
<div class="t" style="right:973px;top:264px;letter-spacing:-0.3px">0.00</div>
<div class="t" style="right:883px;top:264px;letter-spacing:-0.3px">1,650.00</div>
<div class="t" style="left:695px;top:264px;letter-spacing:-0.3px">6/30/2014</div>
<div class="t" style="left:773px;top:264px;color:#1aa51a">-</div>
<div style="position:absolute;left:861px;top:264px;width:13px;height:13px;border:1px solid #8e8f8f;background:#fff;"><div style="position:absolute;left:1px;top:1px;width:9px;height:9px;border:1px solid #c0c4cc;background:linear-gradient(135deg,#d8dbe2,#f8f8f8);"></div></div>
<div class="t" style="left:1188px;top:264px;">0</div>
<div class="t" style="left:1439px;top:264px;">Isabel Wong</div>
<div style="position:absolute;left:6px;top:281px;width:21px;height:20px;background:linear-gradient(to bottom,#fbfbfb,#e8e8e8);border-bottom:1px solid #d3d3d3;"></div>
<div style="position:absolute;left:27px;top:281px;width:1px;height:20px;background:#d3d3d3;"></div>
<div class="t" style="left:10px;top:284px;">12</div>
<div style="position:absolute;left:28px;top:281px;width:77px;height:20px;background:#e6e6e6;border-right:1px solid #d3d3d3;border-bottom:1px solid #d3d3d3;"></div>
<div style="position:absolute;left:105px;top:281px;width:84px;height:20px;background:#e6e6e6;border-right:1px solid #d3d3d3;border-bottom:1px solid #d3d3d3;"></div>
<div style="position:absolute;left:189px;top:281px;width:83px;height:20px;background:#e6e6e6;border-right:1px solid #d3d3d3;border-bottom:1px solid #d3d3d3;"></div>
<div style="position:absolute;left:272px;top:281px;width:121px;height:20px;background:#e6e6e6;border-right:1px solid #d3d3d3;border-bottom:1px solid #d3d3d3;"></div>
<div style="position:absolute;left:393px;top:281px;width:105px;height:20px;background:#e6e6e6;border-right:1px solid #d3d3d3;border-bottom:1px solid #d3d3d3;"></div>
<div style="position:absolute;left:498px;top:281px;width:105px;height:20px;background:#e6e6e6;border-right:1px solid #d3d3d3;border-bottom:1px solid #d3d3d3;"></div>
<div style="position:absolute;left:603px;top:281px;width:90px;height:20px;background:#e6e6e6;border-right:1px solid #d3d3d3;border-bottom:1px solid #d3d3d3;"></div>
<div style="position:absolute;left:693px;top:281px;width:77px;height:20px;background:#ffffff;border-right:1px solid #d3d3d3;border-bottom:1px solid #d3d3d3;"></div>
<div style="position:absolute;left:770px;top:281px;width:59px;height:20px;background:#e6e6e6;border-right:1px solid #d3d3d3;border-bottom:1px solid #d3d3d3;"></div>
<div style="position:absolute;left:829px;top:281px;width:78px;height:20px;background:#ffffff;border-right:1px solid #d3d3d3;border-bottom:1px solid #d3d3d3;"></div>
<div style="position:absolute;left:907px;top:281px;width:74px;height:20px;background:#ffffff;border-right:1px solid #d3d3d3;border-bottom:1px solid #d3d3d3;"></div>
<div style="position:absolute;left:981px;top:281px;width:105px;height:20px;background:#e6e6e6;border-right:1px solid #d3d3d3;border-bottom:1px solid #d3d3d3;"></div>
<div style="position:absolute;left:1086px;top:281px;width:100px;height:20px;background:#ffffff;border-right:1px solid #d3d3d3;border-bottom:1px solid #d3d3d3;"></div>
<div style="position:absolute;left:1186px;top:281px;width:47px;height:20px;background:#ffffff;border-right:1px solid #d3d3d3;border-bottom:1px solid #d3d3d3;"></div>
<div style="position:absolute;left:1233px;top:281px;width:136px;height:20px;background:#ffffff;border-right:1px solid #d3d3d3;border-bottom:1px solid #d3d3d3;"></div>
<div style="position:absolute;left:1369px;top:281px;width:67px;height:20px;background:#ffffff;border-right:1px solid #d3d3d3;border-bottom:1px solid #d3d3d3;"></div>
<div style="position:absolute;left:1436px;top:281px;width:100px;height:20px;background:#e6e6e6;border-right:1px solid #d3d3d3;border-bottom:1px solid #d3d3d3;"></div>
<svg style="position:absolute;left:29px;top:282px" width="17" height="15" viewBox="0 0 17 15"><rect x="0.5" y="3.5" width="13" height="10" fill="#e8f2fc" stroke="#3f6b95"/><path d="M0.5 13.5V3.5H13.5" fill="none" stroke="#8eaac4"/><g stroke="#4a4a4a"><path d="M2 5.5H4M2 7.5H4M2 9.5H4M2 11.5H4M5 5.5H12M5 7.5H12M5 9.5H12M5 11.5H12"/></g><circle cx="11.6" cy="4.3" r="4.4" fill="#13a713"/><path d="M11.6 1.8V6.8M9.1 4.3H14.1" stroke="#fff" stroke-width="1.6"/></svg>
<div class="t" style="left:107px;top:284px;letter-spacing:-0.6px">10400025</div>
<div class="t" style="left:191px;top:284px;letter-spacing:-0.3px">3/26/2014</div>
<div class="t" style="left:275px;top:284px;">Client Invoice</div>
<div class="t" style="right:1078px;top:284px;letter-spacing:-0.3px">1,884.00</div>
<div class="t" style="right:973px;top:284px;letter-spacing:-0.3px">0.00</div>
<div class="t" style="right:883px;top:284px;letter-spacing:-0.3px">1,884.00</div>
<div class="t" style="left:695px;top:284px;letter-spacing:-0.3px">6/30/2014</div>
<div class="t" style="left:773px;top:284px;color:#1aa51a">-</div>
<div style="position:absolute;left:861px;top:284px;width:13px;height:13px;border:1px solid #8e8f8f;background:#fff;"><div style="position:absolute;left:1px;top:1px;width:9px;height:9px;border:1px solid #c0c4cc;background:linear-gradient(135deg,#d8dbe2,#f8f8f8);"></div></div>
<div class="t" style="left:1188px;top:284px;">0</div>
<div class="t" style="left:1439px;top:284px;">Isabel Wong</div>
<div style="position:absolute;left:6px;top:301px;width:21px;height:20px;background:linear-gradient(to bottom,#fbfbfb,#e8e8e8);border-bottom:1px solid #d3d3d3;"></div>
<div style="position:absolute;left:27px;top:301px;width:1px;height:20px;background:#d3d3d3;"></div>
<div class="t" style="left:10px;top:304px;">13</div>
<div style="position:absolute;left:28px;top:301px;width:77px;height:20px;background:#e6e6e6;border-right:1px solid #d3d3d3;border-bottom:1px solid #d3d3d3;"></div>
<div style="position:absolute;left:105px;top:301px;width:84px;height:20px;background:#e6e6e6;border-right:1px solid #d3d3d3;border-bottom:1px solid #d3d3d3;"></div>
<div style="position:absolute;left:189px;top:301px;width:83px;height:20px;background:#e6e6e6;border-right:1px solid #d3d3d3;border-bottom:1px solid #d3d3d3;"></div>
<div style="position:absolute;left:272px;top:301px;width:121px;height:20px;background:#e6e6e6;border-right:1px solid #d3d3d3;border-bottom:1px solid #d3d3d3;"></div>
<div style="position:absolute;left:393px;top:301px;width:105px;height:20px;background:#e6e6e6;border-right:1px solid #d3d3d3;border-bottom:1px solid #d3d3d3;"></div>
<div style="position:absolute;left:498px;top:301px;width:105px;height:20px;background:#e6e6e6;border-right:1px solid #d3d3d3;border-bottom:1px solid #d3d3d3;"></div>
<div style="position:absolute;left:603px;top:301px;width:90px;height:20px;background:#e6e6e6;border-right:1px solid #d3d3d3;border-bottom:1px solid #d3d3d3;"></div>
<div style="position:absolute;left:693px;top:301px;width:77px;height:20px;background:#ffffff;border-right:1px solid #d3d3d3;border-bottom:1px solid #d3d3d3;"></div>
<div style="position:absolute;left:770px;top:301px;width:59px;height:20px;background:#e6e6e6;border-right:1px solid #d3d3d3;border-bottom:1px solid #d3d3d3;"></div>
<div style="position:absolute;left:829px;top:301px;width:78px;height:20px;background:#ffffff;border-right:1px solid #d3d3d3;border-bottom:1px solid #d3d3d3;"></div>
<div style="position:absolute;left:907px;top:301px;width:74px;height:20px;background:#ffffff;border-right:1px solid #d3d3d3;border-bottom:1px solid #d3d3d3;"></div>
<div style="position:absolute;left:981px;top:301px;width:105px;height:20px;background:#e6e6e6;border-right:1px solid #d3d3d3;border-bottom:1px solid #d3d3d3;"></div>
<div style="position:absolute;left:1086px;top:301px;width:100px;height:20px;background:#ffffff;border-right:1px solid #d3d3d3;border-bottom:1px solid #d3d3d3;"></div>
<div style="position:absolute;left:1186px;top:301px;width:47px;height:20px;background:#ffffff;border-right:1px solid #d3d3d3;border-bottom:1px solid #d3d3d3;"></div>
<div style="position:absolute;left:1233px;top:301px;width:136px;height:20px;background:#ffffff;border-right:1px solid #d3d3d3;border-bottom:1px solid #d3d3d3;"></div>
<div style="position:absolute;left:1369px;top:301px;width:67px;height:20px;background:#ffffff;border-right:1px solid #d3d3d3;border-bottom:1px solid #d3d3d3;"></div>
<div style="position:absolute;left:1436px;top:301px;width:100px;height:20px;background:#e6e6e6;border-right:1px solid #d3d3d3;border-bottom:1px solid #d3d3d3;"></div>
<svg style="position:absolute;left:29px;top:302px" width="17" height="15" viewBox="0 0 17 15"><rect x="0.5" y="3.5" width="13" height="10" fill="#e8f2fc" stroke="#3f6b95"/><path d="M0.5 13.5V3.5H13.5" fill="none" stroke="#8eaac4"/><g stroke="#4a4a4a"><path d="M2 5.5H4M2 7.5H4M2 9.5H4M2 11.5H4M5 5.5H12M5 7.5H12M5 9.5H12M5 11.5H12"/></g><circle cx="11.6" cy="4.3" r="4.4" fill="#13a713"/><path d="M11.6 1.8V6.8M9.1 4.3H14.1" stroke="#fff" stroke-width="1.6"/></svg>
<div class="t" style="left:107px;top:304px;letter-spacing:-0.6px">10400026</div>
<div class="t" style="left:191px;top:304px;letter-spacing:-0.3px">3/26/2014</div>
<div class="t" style="left:275px;top:304px;">Client Invoice</div>
<div class="t" style="right:1078px;top:304px;letter-spacing:-0.3px">2,512.00</div>
<div class="t" style="right:973px;top:304px;letter-spacing:-0.3px">0.00</div>
<div class="t" style="right:883px;top:304px;letter-spacing:-0.3px">2,512.00</div>
<div class="t" style="left:695px;top:304px;letter-spacing:-0.3px">5/1/2014</div>
<div class="t" style="left:773px;top:304px;color:#1aa51a">-</div>
<div style="position:absolute;left:861px;top:304px;width:13px;height:13px;border:1px solid #8e8f8f;background:#fff;"><div style="position:absolute;left:1px;top:1px;width:9px;height:9px;border:1px solid #c0c4cc;background:linear-gradient(135deg,#d8dbe2,#f8f8f8);"></div></div>
<div class="t" style="left:1188px;top:304px;">0</div>
<div class="t" style="left:1439px;top:304px;">Isabel Wong</div>
<div style="position:absolute;left:6px;top:321px;width:21px;height:20px;background:linear-gradient(to bottom,#fbfbfb,#e8e8e8);border-bottom:1px solid #d3d3d3;"></div>
<div style="position:absolute;left:27px;top:321px;width:1px;height:20px;background:#d3d3d3;"></div>
<div class="t" style="left:10px;top:324px;">14</div>
<div style="position:absolute;left:28px;top:321px;width:77px;height:20px;background:#dcdcdc;border-right:1px solid #d3d3d3;border-bottom:1px solid #c2c2c2;"></div>
<div style="position:absolute;left:105px;top:321px;width:84px;height:20px;background:#dcdcdc;border-right:1px solid #d3d3d3;border-bottom:1px solid #c2c2c2;"></div>
<div style="position:absolute;left:189px;top:321px;width:83px;height:20px;background:#dcdcdc;border-right:1px solid #d3d3d3;border-bottom:1px solid #c2c2c2;"></div>
<div style="position:absolute;left:272px;top:321px;width:121px;height:20px;background:#dcdcdc;border-right:1px solid #d3d3d3;border-bottom:1px solid #c2c2c2;"></div>
<div style="position:absolute;left:393px;top:321px;width:105px;height:20px;background:#dcdcdc;border-right:1px solid #d3d3d3;border-bottom:1px solid #c2c2c2;"></div>
<div style="position:absolute;left:498px;top:321px;width:105px;height:20px;background:#dcdcdc;border-right:1px solid #d3d3d3;border-bottom:1px solid #c2c2c2;"></div>
<div style="position:absolute;left:603px;top:321px;width:90px;height:20px;background:#dcdcdc;border-right:1px solid #d3d3d3;border-bottom:1px solid #c2c2c2;"></div>
<div style="position:absolute;left:693px;top:321px;width:77px;height:20px;background:#f1f1f1;border-right:1px solid #d3d3d3;border-bottom:1px solid #c2c2c2;"></div>
<div style="position:absolute;left:770px;top:321px;width:59px;height:20px;background:#dcdcdc;border-right:1px solid #d3d3d3;border-bottom:1px solid #c2c2c2;"></div>
<div style="position:absolute;left:829px;top:321px;width:78px;height:20px;background:#f1f1f1;border-right:1px solid #d3d3d3;border-bottom:1px solid #c2c2c2;"></div>
<div style="position:absolute;left:907px;top:321px;width:74px;height:20px;background:#f1f1f1;border-right:1px solid #d3d3d3;border-bottom:1px solid #c2c2c2;"></div>
<div style="position:absolute;left:981px;top:321px;width:105px;height:20px;background:#dcdcdc;border-right:1px solid #d3d3d3;border-bottom:1px solid #c2c2c2;"></div>
<div style="position:absolute;left:1086px;top:321px;width:100px;height:20px;background:#f1f1f1;border-right:1px solid #d3d3d3;border-bottom:1px solid #c2c2c2;"></div>
<div style="position:absolute;left:1186px;top:321px;width:47px;height:20px;background:#f1f1f1;border-right:1px solid #d3d3d3;border-bottom:1px solid #c2c2c2;"></div>
<div style="position:absolute;left:1233px;top:321px;width:136px;height:20px;background:#f1f1f1;border-right:1px solid #d3d3d3;border-bottom:1px solid #c2c2c2;"></div>
<div style="position:absolute;left:1369px;top:321px;width:67px;height:20px;background:#f1f1f1;border-right:1px solid #d3d3d3;border-bottom:1px solid #c2c2c2;"></div>
<div style="position:absolute;left:1436px;top:321px;width:100px;height:20px;background:#dcdcdc;border-right:1px solid #d3d3d3;border-bottom:1px solid #c2c2c2;"></div>
<div style="position:absolute;left:6px;top:320px;width:1530px;height:1px;background:#c2c2c2;"></div>
<div style="position:absolute;left:27px;top:320px;width:78px;height:21px;border:2px solid #b4b4b4;"></div>
<svg style="position:absolute;left:29px;top:322px" width="17" height="15" viewBox="0 0 17 15"><rect x="0.5" y="3.5" width="13" height="10" fill="#f3f3f3" stroke="#9c9c9c"/><g stroke="#8c8c8c"><path d="M2 5.5H4M2 7.5H4M2 9.5H4M2 11.5H4M5 5.5H12M5 7.5H12M5 9.5H12M5 11.5H12"/></g><circle cx="11.6" cy="4.3" r="4.3" fill="#a2a2a2"/><path d="M11.6 1.8V6.8M9.1 4.3H14.1" stroke="#fff" stroke-width="1.5"/></svg>
<div class="t" style="left:107px;top:324px;letter-spacing:-0.6px">10400027</div>
<div class="t" style="left:191px;top:324px;letter-spacing:-0.3px">3/26/2014</div>
<div class="t" style="left:275px;top:324px;">Client Invoice</div>
<div class="t" style="right:1078px;top:324px;letter-spacing:-0.3px">30,400.00</div>
<div class="t" style="right:973px;top:324px;letter-spacing:-0.3px">0.00</div>
<div class="t" style="right:883px;top:324px;letter-spacing:-0.3px">30,400.00</div>
<div class="t" style="left:695px;top:324px;letter-spacing:-0.3px">5/1/2014</div>
<div class="t" style="left:773px;top:324px;color:#1aa51a">-</div>
<div style="position:absolute;left:861px;top:324px;width:13px;height:13px;border:1px solid #8e8f8f;background:#fff;"><div style="position:absolute;left:1px;top:1px;width:9px;height:9px;border:1px solid #c0c4cc;background:linear-gradient(135deg,#d8dbe2,#f8f8f8);"></div></div>
<div class="t" style="left:1188px;top:324px;">0</div>
<div class="t" style="left:1439px;top:324px;">Isabel Wong</div>
<svg style="position:absolute;left:757px;top:329px" width="8" height="5" viewBox="0 0 8 5"><path d="M0 0H8L4 5Z" fill="#111"/></svg>
<svg style="position:absolute;left:968px;top:329px" width="8" height="5" viewBox="0 0 8 5"><path d="M0 0H8L4 5Z" fill="#111"/></svg>
<svg style="position:absolute;left:1424px;top:329px" width="8" height="5" viewBox="0 0 8 5"><path d="M0 0H8L4 5Z" fill="#111"/></svg>
<div style="position:absolute;left:6px;top:341px;width:21px;height:20px;background:linear-gradient(to bottom,#fbfbfb,#e8e8e8);border-bottom:1px solid #d3d3d3;"></div>
<div style="position:absolute;left:27px;top:341px;width:1px;height:20px;background:#d3d3d3;"></div>
<div class="t" style="left:10px;top:344px;">15</div>
<div style="position:absolute;left:28px;top:341px;width:77px;height:20px;background:#e6e6e6;border-right:1px solid #d3d3d3;border-bottom:1px solid #d3d3d3;"></div>
<div style="position:absolute;left:105px;top:341px;width:84px;height:20px;background:#e6e6e6;border-right:1px solid #d3d3d3;border-bottom:1px solid #d3d3d3;"></div>
<div style="position:absolute;left:189px;top:341px;width:83px;height:20px;background:#e6e6e6;border-right:1px solid #d3d3d3;border-bottom:1px solid #d3d3d3;"></div>
<div style="position:absolute;left:272px;top:341px;width:121px;height:20px;background:#e6e6e6;border-right:1px solid #d3d3d3;border-bottom:1px solid #d3d3d3;"></div>
<div style="position:absolute;left:393px;top:341px;width:105px;height:20px;background:#e6e6e6;border-right:1px solid #d3d3d3;border-bottom:1px solid #d3d3d3;"></div>
<div style="position:absolute;left:498px;top:341px;width:105px;height:20px;background:#e6e6e6;border-right:1px solid #d3d3d3;border-bottom:1px solid #d3d3d3;"></div>
<div style="position:absolute;left:603px;top:341px;width:90px;height:20px;background:#e6e6e6;border-right:1px solid #d3d3d3;border-bottom:1px solid #d3d3d3;"></div>
<div style="position:absolute;left:693px;top:341px;width:77px;height:20px;background:#ffffff;border-right:1px solid #d3d3d3;border-bottom:1px solid #d3d3d3;"></div>
<div style="position:absolute;left:770px;top:341px;width:59px;height:20px;background:#e6e6e6;border-right:1px solid #d3d3d3;border-bottom:1px solid #d3d3d3;"></div>
<div style="position:absolute;left:829px;top:341px;width:78px;height:20px;background:#ffffff;border-right:1px solid #d3d3d3;border-bottom:1px solid #d3d3d3;"></div>
<div style="position:absolute;left:907px;top:341px;width:74px;height:20px;background:#ffffff;border-right:1px solid #d3d3d3;border-bottom:1px solid #d3d3d3;"></div>
<div style="position:absolute;left:981px;top:341px;width:105px;height:20px;background:#e6e6e6;border-right:1px solid #d3d3d3;border-bottom:1px solid #d3d3d3;"></div>
<div style="position:absolute;left:1086px;top:341px;width:100px;height:20px;background:#ffffff;border-right:1px solid #d3d3d3;border-bottom:1px solid #d3d3d3;"></div>
<div style="position:absolute;left:1186px;top:341px;width:47px;height:20px;background:#ffffff;border-right:1px solid #d3d3d3;border-bottom:1px solid #d3d3d3;"></div>
<div style="position:absolute;left:1233px;top:341px;width:136px;height:20px;background:#ffffff;border-right:1px solid #d3d3d3;border-bottom:1px solid #d3d3d3;"></div>
<div style="position:absolute;left:1369px;top:341px;width:67px;height:20px;background:#ffffff;border-right:1px solid #d3d3d3;border-bottom:1px solid #d3d3d3;"></div>
<div style="position:absolute;left:1436px;top:341px;width:100px;height:20px;background:#e6e6e6;border-right:1px solid #d3d3d3;border-bottom:1px solid #d3d3d3;"></div>
<svg style="position:absolute;left:29px;top:342px" width="17" height="15" viewBox="0 0 17 15"><rect x="0.5" y="3.5" width="13" height="10" fill="#e8f2fc" stroke="#3f6b95"/><path d="M0.5 13.5V3.5H13.5" fill="none" stroke="#8eaac4"/><g stroke="#4a4a4a"><path d="M2 5.5H4M2 7.5H4M2 9.5H4M2 11.5H4M5 5.5H12M5 7.5H12M5 9.5H12M5 11.5H12"/></g><circle cx="11.6" cy="4.3" r="4.4" fill="#13a713"/><path d="M11.6 1.8V6.8M9.1 4.3H14.1" stroke="#fff" stroke-width="1.6"/></svg>
<div class="t" style="left:107px;top:344px;letter-spacing:-0.6px">10400036</div>
<div class="t" style="left:191px;top:344px;letter-spacing:-0.3px">3/26/2014</div>
<div class="t" style="left:275px;top:344px;">Client Invoice</div>
<div class="t" style="right:1078px;top:344px;letter-spacing:-0.3px">2,512.00</div>
<div class="t" style="right:973px;top:344px;letter-spacing:-0.3px">0.00</div>
<div class="t" style="right:883px;top:344px;letter-spacing:-0.3px">2,512.00</div>
<div class="t" style="left:695px;top:344px;letter-spacing:-0.3px">7/30/2014</div>
<div class="t" style="left:773px;top:344px;color:#1aa51a">-</div>
<div style="position:absolute;left:861px;top:344px;width:13px;height:13px;border:1px solid #8e8f8f;background:#fff;"><div style="position:absolute;left:1px;top:1px;width:9px;height:9px;border:1px solid #c0c4cc;background:linear-gradient(135deg,#d8dbe2,#f8f8f8);"></div></div>
<div class="t" style="left:1188px;top:344px;">0</div>
<div class="t" style="left:1439px;top:344px;">Isabel Wong</div>
<div style="position:absolute;left:6px;top:361px;width:21px;height:20px;background:linear-gradient(to bottom,#fbfbfb,#e8e8e8);border-bottom:1px solid #d3d3d3;"></div>
<div style="position:absolute;left:27px;top:361px;width:1px;height:20px;background:#d3d3d3;"></div>
<div class="t" style="left:10px;top:364px;">16</div>
<div style="position:absolute;left:28px;top:361px;width:77px;height:20px;background:#e6e6e6;border-right:1px solid #d3d3d3;border-bottom:1px solid #d3d3d3;"></div>
<div style="position:absolute;left:105px;top:361px;width:84px;height:20px;background:#e6e6e6;border-right:1px solid #d3d3d3;border-bottom:1px solid #d3d3d3;"></div>
<div style="position:absolute;left:189px;top:361px;width:83px;height:20px;background:#e6e6e6;border-right:1px solid #d3d3d3;border-bottom:1px solid #d3d3d3;"></div>
<div style="position:absolute;left:272px;top:361px;width:121px;height:20px;background:#e6e6e6;border-right:1px solid #d3d3d3;border-bottom:1px solid #d3d3d3;"></div>
<div style="position:absolute;left:393px;top:361px;width:105px;height:20px;background:#e6e6e6;border-right:1px solid #d3d3d3;border-bottom:1px solid #d3d3d3;"></div>
<div style="position:absolute;left:498px;top:361px;width:105px;height:20px;background:#e6e6e6;border-right:1px solid #d3d3d3;border-bottom:1px solid #d3d3d3;"></div>
<div style="position:absolute;left:603px;top:361px;width:90px;height:20px;background:#e6e6e6;border-right:1px solid #d3d3d3;border-bottom:1px solid #d3d3d3;"></div>
<div style="position:absolute;left:693px;top:361px;width:77px;height:20px;background:#ffffff;border-right:1px solid #d3d3d3;border-bottom:1px solid #d3d3d3;"></div>
<div style="position:absolute;left:770px;top:361px;width:59px;height:20px;background:#e6e6e6;border-right:1px solid #d3d3d3;border-bottom:1px solid #d3d3d3;"></div>
<div style="position:absolute;left:829px;top:361px;width:78px;height:20px;background:#ffffff;border-right:1px solid #d3d3d3;border-bottom:1px solid #d3d3d3;"></div>
<div style="position:absolute;left:907px;top:361px;width:74px;height:20px;background:#ffffff;border-right:1px solid #d3d3d3;border-bottom:1px solid #d3d3d3;"></div>
<div style="position:absolute;left:981px;top:361px;width:105px;height:20px;background:#e6e6e6;border-right:1px solid #d3d3d3;border-bottom:1px solid #d3d3d3;"></div>
<div style="position:absolute;left:1086px;top:361px;width:100px;height:20px;background:#ffffff;border-right:1px solid #d3d3d3;border-bottom:1px solid #d3d3d3;"></div>
<div style="position:absolute;left:1186px;top:361px;width:47px;height:20px;background:#ffffff;border-right:1px solid #d3d3d3;border-bottom:1px solid #d3d3d3;"></div>
<div style="position:absolute;left:1233px;top:361px;width:136px;height:20px;background:#ffffff;border-right:1px solid #d3d3d3;border-bottom:1px solid #d3d3d3;"></div>
<div style="position:absolute;left:1369px;top:361px;width:67px;height:20px;background:#ffffff;border-right:1px solid #d3d3d3;border-bottom:1px solid #d3d3d3;"></div>
<div style="position:absolute;left:1436px;top:361px;width:100px;height:20px;background:#e6e6e6;border-right:1px solid #d3d3d3;border-bottom:1px solid #d3d3d3;"></div>
<svg style="position:absolute;left:29px;top:362px" width="17" height="15" viewBox="0 0 17 15"><rect x="0.5" y="3.5" width="13" height="10" fill="#e8f2fc" stroke="#3f6b95"/><path d="M0.5 13.5V3.5H13.5" fill="none" stroke="#8eaac4"/><g stroke="#4a4a4a"><path d="M2 5.5H4M2 7.5H4M2 9.5H4M2 11.5H4M5 5.5H12M5 7.5H12M5 9.5H12M5 11.5H12"/></g><circle cx="11.6" cy="4.3" r="4.4" fill="#13a713"/><path d="M11.6 1.8V6.8M9.1 4.3H14.1" stroke="#fff" stroke-width="1.6"/></svg>
<div class="t" style="left:107px;top:364px;letter-spacing:-0.6px">10400037</div>
<div class="t" style="left:191px;top:364px;letter-spacing:-0.3px">3/26/2014</div>
<div class="t" style="left:275px;top:364px;">Client Invoice</div>
<div class="t" style="right:1078px;top:364px;letter-spacing:-0.3px">2,669.00</div>
<div class="t" style="right:973px;top:364px;letter-spacing:-0.3px">0.00</div>
<div class="t" style="right:883px;top:364px;letter-spacing:-0.3px">2,669.00</div>
<div class="t" style="left:695px;top:364px;letter-spacing:-0.3px">5/1/2014</div>
<div class="t" style="left:773px;top:364px;color:#1aa51a">-</div>
<div style="position:absolute;left:861px;top:364px;width:13px;height:13px;border:1px solid #8e8f8f;background:#fff;"><div style="position:absolute;left:1px;top:1px;width:9px;height:9px;border:1px solid #c0c4cc;background:linear-gradient(135deg,#d8dbe2,#f8f8f8);"></div></div>
<div class="t" style="left:1188px;top:364px;">0</div>
<div class="t" style="left:1439px;top:364px;">Isabel Wong</div>
<div style="position:absolute;left:6px;top:381px;width:21px;height:20px;background:linear-gradient(to bottom,#fbfbfb,#e8e8e8);border-bottom:1px solid #d3d3d3;"></div>
<div style="position:absolute;left:27px;top:381px;width:1px;height:20px;background:#d3d3d3;"></div>
<div class="t" style="left:10px;top:384px;">17</div>
<div style="position:absolute;left:28px;top:381px;width:77px;height:20px;background:#e6e6e6;border-right:1px solid #d3d3d3;border-bottom:1px solid #d3d3d3;"></div>
<div style="position:absolute;left:105px;top:381px;width:84px;height:20px;background:#e6e6e6;border-right:1px solid #d3d3d3;border-bottom:1px solid #d3d3d3;"></div>
<div style="position:absolute;left:189px;top:381px;width:83px;height:20px;background:#e6e6e6;border-right:1px solid #d3d3d3;border-bottom:1px solid #d3d3d3;"></div>
<div style="position:absolute;left:272px;top:381px;width:121px;height:20px;background:#e6e6e6;border-right:1px solid #d3d3d3;border-bottom:1px solid #d3d3d3;"></div>
<div style="position:absolute;left:393px;top:381px;width:105px;height:20px;background:#e6e6e6;border-right:1px solid #d3d3d3;border-bottom:1px solid #d3d3d3;"></div>
<div style="position:absolute;left:498px;top:381px;width:105px;height:20px;background:#e6e6e6;border-right:1px solid #d3d3d3;border-bottom:1px solid #d3d3d3;"></div>
<div style="position:absolute;left:603px;top:381px;width:90px;height:20px;background:#e6e6e6;border-right:1px solid #d3d3d3;border-bottom:1px solid #d3d3d3;"></div>
<div style="position:absolute;left:693px;top:381px;width:77px;height:20px;background:#ffffff;border-right:1px solid #d3d3d3;border-bottom:1px solid #d3d3d3;"></div>
<div style="position:absolute;left:770px;top:381px;width:59px;height:20px;background:#e6e6e6;border-right:1px solid #d3d3d3;border-bottom:1px solid #d3d3d3;"></div>
<div style="position:absolute;left:829px;top:381px;width:78px;height:20px;background:#ffffff;border-right:1px solid #d3d3d3;border-bottom:1px solid #d3d3d3;"></div>
<div style="position:absolute;left:907px;top:381px;width:74px;height:20px;background:#ffffff;border-right:1px solid #d3d3d3;border-bottom:1px solid #d3d3d3;"></div>
<div style="position:absolute;left:981px;top:381px;width:105px;height:20px;background:#e6e6e6;border-right:1px solid #d3d3d3;border-bottom:1px solid #d3d3d3;"></div>
<div style="position:absolute;left:1086px;top:381px;width:100px;height:20px;background:#ffffff;border-right:1px solid #d3d3d3;border-bottom:1px solid #d3d3d3;"></div>
<div style="position:absolute;left:1186px;top:381px;width:47px;height:20px;background:#ffffff;border-right:1px solid #d3d3d3;border-bottom:1px solid #d3d3d3;"></div>
<div style="position:absolute;left:1233px;top:381px;width:136px;height:20px;background:#ffffff;border-right:1px solid #d3d3d3;border-bottom:1px solid #d3d3d3;"></div>
<div style="position:absolute;left:1369px;top:381px;width:67px;height:20px;background:#ffffff;border-right:1px solid #d3d3d3;border-bottom:1px solid #d3d3d3;"></div>
<div style="position:absolute;left:1436px;top:381px;width:100px;height:20px;background:#e6e6e6;border-right:1px solid #d3d3d3;border-bottom:1px solid #d3d3d3;"></div>
<svg style="position:absolute;left:29px;top:382px" width="17" height="15" viewBox="0 0 17 15"><rect x="0.5" y="3.5" width="13" height="10" fill="#e8f2fc" stroke="#3f6b95"/><path d="M0.5 13.5V3.5H13.5" fill="none" stroke="#8eaac4"/><g stroke="#4a4a4a"><path d="M2 5.5H4M2 7.5H4M2 9.5H4M2 11.5H4M5 5.5H12M5 7.5H12M5 9.5H12M5 11.5H12"/></g><circle cx="11.6" cy="4.3" r="4.4" fill="#13a713"/><path d="M11.6 1.8V6.8M9.1 4.3H14.1" stroke="#fff" stroke-width="1.6"/></svg>
<div class="t" style="left:107px;top:384px;letter-spacing:-0.6px">10400046</div>
<div class="t" style="left:191px;top:384px;letter-spacing:-0.3px">3/26/2014</div>
<div class="t" style="left:275px;top:384px;">Client Invoice</div>
<div class="t" style="right:1078px;top:384px;letter-spacing:-0.3px">1,650.00</div>
<div class="t" style="right:973px;top:384px;letter-spacing:-0.3px">0.00</div>
<div class="t" style="right:883px;top:384px;letter-spacing:-0.3px">1,650.00</div>
<div class="t" style="left:695px;top:384px;letter-spacing:-0.3px">8/30/2014</div>
<div class="t" style="left:773px;top:384px;color:#1aa51a">-</div>
<div style="position:absolute;left:861px;top:384px;width:13px;height:13px;border:1px solid #8e8f8f;background:#fff;"><div style="position:absolute;left:1px;top:1px;width:9px;height:9px;border:1px solid #c0c4cc;background:linear-gradient(135deg,#d8dbe2,#f8f8f8);"></div></div>
<div class="t" style="left:1188px;top:384px;">0</div>
<div class="t" style="left:1439px;top:384px;">Isabel Wong</div>
<div style="position:absolute;left:6px;top:401px;width:21px;height:20px;background:linear-gradient(to bottom,#fbfbfb,#e8e8e8);border-bottom:1px solid #d3d3d3;"></div>
<div style="position:absolute;left:27px;top:401px;width:1px;height:20px;background:#d3d3d3;"></div>
<div class="t" style="left:10px;top:404px;">18</div>
<div style="position:absolute;left:28px;top:401px;width:77px;height:20px;background:#e6e6e6;border-right:1px solid #d3d3d3;border-bottom:1px solid #d3d3d3;"></div>
<div style="position:absolute;left:105px;top:401px;width:84px;height:20px;background:#e6e6e6;border-right:1px solid #d3d3d3;border-bottom:1px solid #d3d3d3;"></div>
<div style="position:absolute;left:189px;top:401px;width:83px;height:20px;background:#e6e6e6;border-right:1px solid #d3d3d3;border-bottom:1px solid #d3d3d3;"></div>
<div style="position:absolute;left:272px;top:401px;width:121px;height:20px;background:#e6e6e6;border-right:1px solid #d3d3d3;border-bottom:1px solid #d3d3d3;"></div>
<div style="position:absolute;left:393px;top:401px;width:105px;height:20px;background:#e6e6e6;border-right:1px solid #d3d3d3;border-bottom:1px solid #d3d3d3;"></div>
<div style="position:absolute;left:498px;top:401px;width:105px;height:20px;background:#e6e6e6;border-right:1px solid #d3d3d3;border-bottom:1px solid #d3d3d3;"></div>
<div style="position:absolute;left:603px;top:401px;width:90px;height:20px;background:#e6e6e6;border-right:1px solid #d3d3d3;border-bottom:1px solid #d3d3d3;"></div>
<div style="position:absolute;left:693px;top:401px;width:77px;height:20px;background:#ffffff;border-right:1px solid #d3d3d3;border-bottom:1px solid #d3d3d3;"></div>
<div style="position:absolute;left:770px;top:401px;width:59px;height:20px;background:#e6e6e6;border-right:1px solid #d3d3d3;border-bottom:1px solid #d3d3d3;"></div>
<div style="position:absolute;left:829px;top:401px;width:78px;height:20px;background:#ffffff;border-right:1px solid #d3d3d3;border-bottom:1px solid #d3d3d3;"></div>
<div style="position:absolute;left:907px;top:401px;width:74px;height:20px;background:#ffffff;border-right:1px solid #d3d3d3;border-bottom:1px solid #d3d3d3;"></div>
<div style="position:absolute;left:981px;top:401px;width:105px;height:20px;background:#e6e6e6;border-right:1px solid #d3d3d3;border-bottom:1px solid #d3d3d3;"></div>
<div style="position:absolute;left:1086px;top:401px;width:100px;height:20px;background:#ffffff;border-right:1px solid #d3d3d3;border-bottom:1px solid #d3d3d3;"></div>
<div style="position:absolute;left:1186px;top:401px;width:47px;height:20px;background:#ffffff;border-right:1px solid #d3d3d3;border-bottom:1px solid #d3d3d3;"></div>
<div style="position:absolute;left:1233px;top:401px;width:136px;height:20px;background:#ffffff;border-right:1px solid #d3d3d3;border-bottom:1px solid #d3d3d3;"></div>
<div style="position:absolute;left:1369px;top:401px;width:67px;height:20px;background:#ffffff;border-right:1px solid #d3d3d3;border-bottom:1px solid #d3d3d3;"></div>
<div style="position:absolute;left:1436px;top:401px;width:100px;height:20px;background:#e6e6e6;border-right:1px solid #d3d3d3;border-bottom:1px solid #d3d3d3;"></div>
<svg style="position:absolute;left:29px;top:402px" width="17" height="15" viewBox="0 0 17 15"><rect x="0.5" y="3.5" width="13" height="10" fill="#e8f2fc" stroke="#3f6b95"/><path d="M0.5 13.5V3.5H13.5" fill="none" stroke="#8eaac4"/><g stroke="#4a4a4a"><path d="M2 5.5H4M2 7.5H4M2 9.5H4M2 11.5H4M5 5.5H12M5 7.5H12M5 9.5H12M5 11.5H12"/></g><circle cx="11.6" cy="4.3" r="4.4" fill="#13a713"/><path d="M11.6 1.8V6.8M9.1 4.3H14.1" stroke="#fff" stroke-width="1.6"/></svg>
<div class="t" style="left:107px;top:404px;letter-spacing:-0.6px">10400047</div>
<div class="t" style="left:191px;top:404px;letter-spacing:-0.3px">3/26/2014</div>
<div class="t" style="left:275px;top:404px;">Client Invoice</div>
<div class="t" style="right:1078px;top:404px;letter-spacing:-0.3px">1,884.00</div>
<div class="t" style="right:973px;top:404px;letter-spacing:-0.3px">0.00</div>
<div class="t" style="right:883px;top:404px;letter-spacing:-0.3px">1,884.00</div>
<div class="t" style="left:695px;top:404px;letter-spacing:-0.3px">5/1/2014</div>
<div class="t" style="left:773px;top:404px;color:#1aa51a">-</div>
<div style="position:absolute;left:861px;top:404px;width:13px;height:13px;border:1px solid #8e8f8f;background:#fff;"><div style="position:absolute;left:1px;top:1px;width:9px;height:9px;border:1px solid #c0c4cc;background:linear-gradient(135deg,#d8dbe2,#f8f8f8);"></div></div>
<div class="t" style="left:1188px;top:404px;">0</div>
<div class="t" style="left:1439px;top:404px;">Isabel Wong</div>
<div style="position:absolute;left:6px;top:421px;width:21px;height:20px;background:linear-gradient(to bottom,#fbfbfb,#e8e8e8);border-bottom:1px solid #d3d3d3;"></div>
<div style="position:absolute;left:27px;top:421px;width:1px;height:20px;background:#d3d3d3;"></div>
<div class="t" style="left:10px;top:424px;">19</div>
<div style="position:absolute;left:28px;top:421px;width:77px;height:20px;background:#e6e6e6;border-right:1px solid #d3d3d3;border-bottom:1px solid #d3d3d3;"></div>
<div style="position:absolute;left:105px;top:421px;width:84px;height:20px;background:#e6e6e6;border-right:1px solid #d3d3d3;border-bottom:1px solid #d3d3d3;"></div>
<div style="position:absolute;left:189px;top:421px;width:83px;height:20px;background:#e6e6e6;border-right:1px solid #d3d3d3;border-bottom:1px solid #d3d3d3;"></div>
<div style="position:absolute;left:272px;top:421px;width:121px;height:20px;background:#e6e6e6;border-right:1px solid #d3d3d3;border-bottom:1px solid #d3d3d3;"></div>
<div style="position:absolute;left:393px;top:421px;width:105px;height:20px;background:#e6e6e6;border-right:1px solid #d3d3d3;border-bottom:1px solid #d3d3d3;"></div>
<div style="position:absolute;left:498px;top:421px;width:105px;height:20px;background:#e6e6e6;border-right:1px solid #d3d3d3;border-bottom:1px solid #d3d3d3;"></div>
<div style="position:absolute;left:603px;top:421px;width:90px;height:20px;background:#e6e6e6;border-right:1px solid #d3d3d3;border-bottom:1px solid #d3d3d3;"></div>
<div style="position:absolute;left:693px;top:421px;width:77px;height:20px;background:#ffffff;border-right:1px solid #d3d3d3;border-bottom:1px solid #d3d3d3;"></div>
<div style="position:absolute;left:770px;top:421px;width:59px;height:20px;background:#e6e6e6;border-right:1px solid #d3d3d3;border-bottom:1px solid #d3d3d3;"></div>
<div style="position:absolute;left:829px;top:421px;width:78px;height:20px;background:#ffffff;border-right:1px solid #d3d3d3;border-bottom:1px solid #d3d3d3;"></div>
<div style="position:absolute;left:907px;top:421px;width:74px;height:20px;background:#ffffff;border-right:1px solid #d3d3d3;border-bottom:1px solid #d3d3d3;"></div>
<div style="position:absolute;left:981px;top:421px;width:105px;height:20px;background:#e6e6e6;border-right:1px solid #d3d3d3;border-bottom:1px solid #d3d3d3;"></div>
<div style="position:absolute;left:1086px;top:421px;width:100px;height:20px;background:#ffffff;border-right:1px solid #d3d3d3;border-bottom:1px solid #d3d3d3;"></div>
<div style="position:absolute;left:1186px;top:421px;width:47px;height:20px;background:#ffffff;border-right:1px solid #d3d3d3;border-bottom:1px solid #d3d3d3;"></div>
<div style="position:absolute;left:1233px;top:421px;width:136px;height:20px;background:#ffffff;border-right:1px solid #d3d3d3;border-bottom:1px solid #d3d3d3;"></div>
<div style="position:absolute;left:1369px;top:421px;width:67px;height:20px;background:#ffffff;border-right:1px solid #d3d3d3;border-bottom:1px solid #d3d3d3;"></div>
<div style="position:absolute;left:1436px;top:421px;width:100px;height:20px;background:#e6e6e6;border-right:1px solid #d3d3d3;border-bottom:1px solid #d3d3d3;"></div>
<svg style="position:absolute;left:29px;top:422px" width="17" height="15" viewBox="0 0 17 15"><rect x="0.5" y="3.5" width="13" height="10" fill="#e8f2fc" stroke="#3f6b95"/><path d="M0.5 13.5V3.5H13.5" fill="none" stroke="#8eaac4"/><g stroke="#4a4a4a"><path d="M2 5.5H4M2 7.5H4M2 9.5H4M2 11.5H4M5 5.5H12M5 7.5H12M5 9.5H12M5 11.5H12"/></g><circle cx="11.6" cy="4.3" r="4.4" fill="#13a713"/><path d="M11.6 1.8V6.8M9.1 4.3H14.1" stroke="#fff" stroke-width="1.6"/></svg>
<div class="t" style="left:107px;top:424px;letter-spacing:-0.6px">10400048</div>
<div class="t" style="left:191px;top:424px;letter-spacing:-0.3px">3/26/2014</div>
<div class="t" style="left:275px;top:424px;">Client Invoice</div>
<div class="t" style="right:1078px;top:424px;letter-spacing:-0.3px">2,512.00</div>
<div class="t" style="right:973px;top:424px;letter-spacing:-0.3px">0.00</div>
<div class="t" style="right:883px;top:424px;letter-spacing:-0.3px">2,512.00</div>
<div class="t" style="left:695px;top:424px;letter-spacing:-0.3px">8/30/2014</div>
<div class="t" style="left:773px;top:424px;color:#1aa51a">-</div>
<div style="position:absolute;left:861px;top:424px;width:13px;height:13px;border:1px solid #8e8f8f;background:#fff;"><div style="position:absolute;left:1px;top:1px;width:9px;height:9px;border:1px solid #c0c4cc;background:linear-gradient(135deg,#d8dbe2,#f8f8f8);"></div></div>
<div class="t" style="left:1188px;top:424px;">0</div>
<div class="t" style="left:1439px;top:424px;">Isabel Wong</div>
<div style="position:absolute;left:6px;top:441px;width:21px;height:20px;background:linear-gradient(to bottom,#fbfbfb,#e8e8e8);border-bottom:1px solid #d3d3d3;"></div>
<div style="position:absolute;left:27px;top:441px;width:1px;height:20px;background:#d3d3d3;"></div>
<div class="t" style="left:10px;top:444px;">20</div>
<div style="position:absolute;left:28px;top:441px;width:77px;height:20px;background:#e6e6e6;border-right:1px solid #d3d3d3;border-bottom:1px solid #d3d3d3;"></div>
<div style="position:absolute;left:105px;top:441px;width:84px;height:20px;background:#e6e6e6;border-right:1px solid #d3d3d3;border-bottom:1px solid #d3d3d3;"></div>
<div style="position:absolute;left:189px;top:441px;width:83px;height:20px;background:#e6e6e6;border-right:1px solid #d3d3d3;border-bottom:1px solid #d3d3d3;"></div>
<div style="position:absolute;left:272px;top:441px;width:121px;height:20px;background:#e6e6e6;border-right:1px solid #d3d3d3;border-bottom:1px solid #d3d3d3;"></div>
<div style="position:absolute;left:393px;top:441px;width:105px;height:20px;background:#e6e6e6;border-right:1px solid #d3d3d3;border-bottom:1px solid #d3d3d3;"></div>
<div style="position:absolute;left:498px;top:441px;width:105px;height:20px;background:#e6e6e6;border-right:1px solid #d3d3d3;border-bottom:1px solid #d3d3d3;"></div>
<div style="position:absolute;left:603px;top:441px;width:90px;height:20px;background:#e6e6e6;border-right:1px solid #d3d3d3;border-bottom:1px solid #d3d3d3;"></div>
<div style="position:absolute;left:693px;top:441px;width:77px;height:20px;background:#ffffff;border-right:1px solid #d3d3d3;border-bottom:1px solid #d3d3d3;"></div>
<div style="position:absolute;left:770px;top:441px;width:59px;height:20px;background:#e6e6e6;border-right:1px solid #d3d3d3;border-bottom:1px solid #d3d3d3;"></div>
<div style="position:absolute;left:829px;top:441px;width:78px;height:20px;background:#ffffff;border-right:1px solid #d3d3d3;border-bottom:1px solid #d3d3d3;"></div>
<div style="position:absolute;left:907px;top:441px;width:74px;height:20px;background:#ffffff;border-right:1px solid #d3d3d3;border-bottom:1px solid #d3d3d3;"></div>
<div style="position:absolute;left:981px;top:441px;width:105px;height:20px;background:#e6e6e6;border-right:1px solid #d3d3d3;border-bottom:1px solid #d3d3d3;"></div>
<div style="position:absolute;left:1086px;top:441px;width:100px;height:20px;background:#ffffff;border-right:1px solid #d3d3d3;border-bottom:1px solid #d3d3d3;"></div>
<div style="position:absolute;left:1186px;top:441px;width:47px;height:20px;background:#ffffff;border-right:1px solid #d3d3d3;border-bottom:1px solid #d3d3d3;"></div>
<div style="position:absolute;left:1233px;top:441px;width:136px;height:20px;background:#ffffff;border-right:1px solid #d3d3d3;border-bottom:1px solid #d3d3d3;"></div>
<div style="position:absolute;left:1369px;top:441px;width:67px;height:20px;background:#ffffff;border-right:1px solid #d3d3d3;border-bottom:1px solid #d3d3d3;"></div>
<div style="position:absolute;left:1436px;top:441px;width:100px;height:20px;background:#e6e6e6;border-right:1px solid #d3d3d3;border-bottom:1px solid #d3d3d3;"></div>
<svg style="position:absolute;left:29px;top:442px" width="17" height="15" viewBox="0 0 17 15"><rect x="0.5" y="3.5" width="13" height="10" fill="#e8f2fc" stroke="#3f6b95"/><path d="M0.5 13.5V3.5H13.5" fill="none" stroke="#8eaac4"/><g stroke="#4a4a4a"><path d="M2 5.5H4M2 7.5H4M2 9.5H4M2 11.5H4M5 5.5H12M5 7.5H12M5 9.5H12M5 11.5H12"/></g><circle cx="11.6" cy="4.3" r="4.4" fill="#13a713"/><path d="M11.6 1.8V6.8M9.1 4.3H14.1" stroke="#fff" stroke-width="1.6"/></svg>
<div class="t" style="left:107px;top:444px;letter-spacing:-0.6px">10400049</div>
<div class="t" style="left:191px;top:444px;letter-spacing:-0.3px">3/26/2014</div>
<div class="t" style="left:275px;top:444px;">Client Invoice</div>
<div class="t" style="right:1078px;top:444px;letter-spacing:-0.3px">30,400.00</div>
<div class="t" style="right:973px;top:444px;letter-spacing:-0.3px">0.00</div>
<div class="t" style="right:883px;top:444px;letter-spacing:-0.3px">30,400.00</div>
<div class="t" style="left:695px;top:444px;letter-spacing:-0.3px">8/30/2014</div>
<div class="t" style="left:773px;top:444px;color:#1aa51a">-</div>
<div style="position:absolute;left:861px;top:444px;width:13px;height:13px;border:1px solid #8e8f8f;background:#fff;"><div style="position:absolute;left:1px;top:1px;width:9px;height:9px;border:1px solid #c0c4cc;background:linear-gradient(135deg,#d8dbe2,#f8f8f8);"></div></div>
<div class="t" style="left:1188px;top:444px;">0</div>
<div class="t" style="left:1439px;top:444px;">Isabel Wong</div>
<div style="position:absolute;left:6px;top:461px;width:21px;height:20px;background:linear-gradient(to bottom,#fbfbfb,#e8e8e8);border-bottom:1px solid #d3d3d3;"></div>
<div style="position:absolute;left:27px;top:461px;width:1px;height:20px;background:#d3d3d3;"></div>
<div class="t" style="left:10px;top:464px;">21</div>
<div style="position:absolute;left:28px;top:461px;width:77px;height:20px;background:#e6e6e6;border-right:1px solid #d3d3d3;border-bottom:1px solid #d3d3d3;"></div>
<div style="position:absolute;left:105px;top:461px;width:84px;height:20px;background:#e6e6e6;border-right:1px solid #d3d3d3;border-bottom:1px solid #d3d3d3;"></div>
<div style="position:absolute;left:189px;top:461px;width:83px;height:20px;background:#e6e6e6;border-right:1px solid #d3d3d3;border-bottom:1px solid #d3d3d3;"></div>
<div style="position:absolute;left:272px;top:461px;width:121px;height:20px;background:#e6e6e6;border-right:1px solid #d3d3d3;border-bottom:1px solid #d3d3d3;"></div>
<div style="position:absolute;left:393px;top:461px;width:105px;height:20px;background:#e6e6e6;border-right:1px solid #d3d3d3;border-bottom:1px solid #d3d3d3;"></div>
<div style="position:absolute;left:498px;top:461px;width:105px;height:20px;background:#e6e6e6;border-right:1px solid #d3d3d3;border-bottom:1px solid #d3d3d3;"></div>
<div style="position:absolute;left:603px;top:461px;width:90px;height:20px;background:#e6e6e6;border-right:1px solid #d3d3d3;border-bottom:1px solid #d3d3d3;"></div>
<div style="position:absolute;left:693px;top:461px;width:77px;height:20px;background:#ffffff;border-right:1px solid #d3d3d3;border-bottom:1px solid #d3d3d3;"></div>
<div style="position:absolute;left:770px;top:461px;width:59px;height:20px;background:#e6e6e6;border-right:1px solid #d3d3d3;border-bottom:1px solid #d3d3d3;"></div>
<div style="position:absolute;left:829px;top:461px;width:78px;height:20px;background:#e6e6e6;border-right:1px solid #d3d3d3;border-bottom:1px solid #d3d3d3;"></div>
<div style="position:absolute;left:907px;top:461px;width:74px;height:20px;background:#ffffff;border-right:1px solid #d3d3d3;border-bottom:1px solid #d3d3d3;"></div>
<div style="position:absolute;left:981px;top:461px;width:105px;height:20px;background:#e6e6e6;border-right:1px solid #d3d3d3;border-bottom:1px solid #d3d3d3;"></div>
<div style="position:absolute;left:1086px;top:461px;width:100px;height:20px;background:#ffffff;border-right:1px solid #d3d3d3;border-bottom:1px solid #d3d3d3;"></div>
<div style="position:absolute;left:1186px;top:461px;width:47px;height:20px;background:#ffffff;border-right:1px solid #d3d3d3;border-bottom:1px solid #d3d3d3;"></div>
<div style="position:absolute;left:1233px;top:461px;width:136px;height:20px;background:#ffffff;border-right:1px solid #d3d3d3;border-bottom:1px solid #d3d3d3;"></div>
<div style="position:absolute;left:1369px;top:461px;width:67px;height:20px;background:#ffffff;border-right:1px solid #d3d3d3;border-bottom:1px solid #d3d3d3;"></div>
<div style="position:absolute;left:1436px;top:461px;width:100px;height:20px;background:#e6e6e6;border-right:1px solid #d3d3d3;border-bottom:1px solid #d3d3d3;"></div>
<svg style="position:absolute;left:29px;top:462px" width="17" height="15" viewBox="0 0 17 15"><rect x="0.5" y="3.5" width="13" height="10" fill="#f3f3f3" stroke="#9c9c9c"/><g stroke="#8c8c8c"><path d="M2 5.5H4M2 7.5H4M2 9.5H4M2 11.5H4M5 5.5H12M5 7.5H12M5 9.5H12M5 11.5H12"/></g><circle cx="11.6" cy="4.3" r="4.3" fill="#a2a2a2"/><path d="M11.6 1.8V6.8M9.1 4.3H14.1" stroke="#fff" stroke-width="1.5"/></svg>
<div class="t" style="left:107px;top:464px;letter-spacing:-0.6px">1</div>
<div class="t" style="left:191px;top:464px;letter-spacing:-0.3px">3/26/2014</div>
<div class="t" style="left:275px;top:464px;">Opening Balance</div>
<div class="t" style="right:1078px;top:464px;letter-spacing:-0.3px">288,960.00</div>
<div class="t" style="right:973px;top:464px;letter-spacing:-0.3px">0.00</div>
<div class="t" style="right:883px;top:464px;letter-spacing:-0.3px">288,960.00</div>
<div class="t" style="left:695px;top:464px;letter-spacing:-0.3px">4/27/2014</div>
<div class="t" style="left:772px;top:464px;color:#f5a500">2</div>
<div class="t" style="left:1188px;top:464px;">0</div>
<div style="position:absolute;left:27px;top:481px;width:1px;height:5px;background:#d3d3d3;"></div>
<div style="position:absolute;left:4px;top:488px;width:1562px;height:1px;background:#dadada;"></div>
<div style="position:absolute;left:1548px;top:130px;width:15px;height:356px;background:#ececec;"></div>
<svg style="position:absolute;left:1551px;top:137px" width="8" height="4" viewBox="0 0 8 4"><path d="M0 4L4 0L8 4Z" fill="#444"/></svg>
<svg style="position:absolute;left:1551px;top:475px" width="8" height="4" viewBox="0 0 8 4"><path d="M0 0L4 4L8 0Z" fill="#444"/></svg>
<div style="position:absolute;left:1548px;top:236px;width:15px;height:232px;border:1px solid #8f8f8f;border-radius:2px;background:linear-gradient(to right,#f4f4f4,#e9e9e9 45%,#d8d8d8 55%,#c9c9c9);"></div>
<div style="position:absolute;left:1552px;top:349px;width:7px;height:1px;background:#555;"></div>
<div style="position:absolute;left:1552px;top:351px;width:7px;height:1px;background:#555;"></div>
<div style="position:absolute;left:1552px;top:354px;width:7px;height:1px;background:#555;"></div>
<div style="position:absolute;left:4px;top:489px;width:1562px;height:31px;background:linear-gradient(to bottom,#ffffff 0px,#ffffff 1px,#f8f8f8 1px,#f8f8f8 4px,#fdfdfd 4px,#f0f0f0 19px,#e7e7e7 20px,#e7e7e7 30px,#f0f0f0 31px);"></div>
<div style="position:absolute;left:4px;top:520px;width:1562px;height:1px;background:#6784a2;"></div>
<div style="position:absolute;left:158px;top:496px;width:60px;height:24px;border:1px solid #6784a2;border-bottom:none;border-radius:4px 4px 0 0;background:linear-gradient(to bottom,#ffffff 0px,#f7f7f7 12px,#e3e3e3 13px,#ececec 100%);"></div>
<div class="t" style="left:176px;top:502px;">Origin</div>
<div style="position:absolute;left:8px;top:495px;width:151px;height:26px;border:1px solid #6784a2;border-bottom:none;border-radius:4px 4px 0 0;background:linear-gradient(to bottom,#ffffff 0px,#fbfbfb 12px,#f0f0f0 13px,#f6f6f6 100%);"></div>
<div class="t" style="left:25px;top:501px;">Cash Collection History</div>
<svg style="position:absolute;left:224px;top:495px" width="20" height="20" viewBox="0 0 20 20"><g fill="none" stroke="#2a7d3c" stroke-width="1.5" stroke-linecap="round"><path d="M11 5.5 Q16 5.8 15.6 9.2 Q15.2 11.6 12.6 11.7" stroke-opacity="0.85"/><path d="M9 14.5 Q4 14.2 4.4 10.8 Q4.8 8.4 7.4 8.3" stroke-opacity="0.85"/></g><path d="M9 5.4L11.8 2.6V8.2Z" fill="#236f33"/><path d="M11.2 14.6L8.4 11.8V17.4Z" fill="#236f33"/></svg>
<svg style="position:absolute;left:254px;top:500px" width="11" height="12" viewBox="0 0 11 12"><path d="M3.5 4.2 A4 4 0 1 1 2.4 8.5" fill="none" stroke="#a9a9a9" stroke-width="1.8"/><path d="M0.5 3L4 0.3V6Z" fill="#9c9c9c"/></svg>
<svg style="position:absolute;left:277px;top:498px" width="16" height="16" viewBox="0 0 16 16"><g fill="none" stroke="#8f8f8f" stroke-width="1"><path d="M0.5 1.5V14.5H14.5V1.5"/><path d="M1 0.5H5M10 0.5H14"/><path d="M3.5 2V7.5H11.5V2"/><path d="M4.5 14V9.5H10.5V14"/></g><rect x="8" y="11" width="2" height="2" fill="#8f8f8f"/></svg>
<svg style="position:absolute;left:300px;top:496px" width="18" height="17" viewBox="0 0 18 17"><rect x="1.5" y="5.5" width="6" height="8" fill="#eef3f8" stroke="#5b80a8"/><path d="M1.5 7.5H7.5M1.5 9.5H7.5M1.5 11.5H7.5" stroke="#5b80a8"/><rect x="6.5" y="13.5" width="6" height="2" fill="#eef3f8" stroke="#4d74a0"/><circle cx="13.5" cy="4.5" r="3.6" fill="#16a016"/><path d="M13.5 2.3V6.7M11.3 4.5H15.7" stroke="#fff" stroke-width="1.5"/></svg>
<svg style="position:absolute;left:325px;top:496px" width="18" height="17" viewBox="0 0 18 17"><rect x="1.5" y="5.5" width="6" height="4" fill="#eef3f8" stroke="#5b80a8"/><path d="M1.5 7.5H7.5" stroke="#5b80a8"/><rect x="6.5" y="9.5" width="6" height="2" fill="#eef3f8" stroke="#8fb0d0"/><rect x="1.5" y="11.5" width="6" height="4" fill="#eef3f8" stroke="#5b80a8"/><path d="M1.5 13.5H7.5" stroke="#5b80a8"/><circle cx="13.3" cy="4.5" r="3.6" fill="#b01818"/><path d="M12 3.2L14.6 5.8M14.6 3.2L12 5.8" stroke="#fff" stroke-width="1.2"/></svg>
<svg style="position:absolute;left:350px;top:496px" width="17" height="17" viewBox="0 0 17 17"><rect x="3.5" y="1.5" width="11" height="9" fill="#fff" stroke="#7f9fbf"/><path d="M5 3.5H11.5M5 5.5H11.5M5 7.5H11.5M5 9.5H11.5" stroke="#111" stroke-width="1.2"/><path d="M12.5 3.5H13.5M12.5 5.5H13.5M12.5 7.5H13.5" stroke="#333"/><defs><linearGradient id="gp" x1="0" y1="0" x2="0" y2="1"><stop offset="0" stop-color="#ffffff"/><stop offset="0.5" stop-color="#e8e8e8"/><stop offset="0.75" stop-color="#9a9a9a"/><stop offset="1" stop-color="#555"/></linearGradient></defs><rect x="0.5" y="9.5" width="16" height="7" rx="2" fill="url(#gp)" stroke="#777"/><circle cx="12.5" cy="12.3" r="0.8" fill="#2a2"/><circle cx="14.4" cy="12.3" r="0.8" fill="#2a2"/></svg>
<svg style="position:absolute;left:376px;top:496px" width="17" height="17" viewBox="0 0 17 17"><rect x="3.5" y="1.5" width="11" height="9" fill="#fff" stroke="#7f9fbf"/><path d="M5 3.5H11.5M5 5.5H11.5M5 7.5H11.5M5 9.5H11.5" stroke="#111" stroke-width="1.2"/><path d="M12.5 3.5H13.5M12.5 5.5H13.5M12.5 7.5H13.5" stroke="#333"/><defs><linearGradient id="gp" x1="0" y1="0" x2="0" y2="1"><stop offset="0" stop-color="#ffffff"/><stop offset="0.5" stop-color="#e8e8e8"/><stop offset="0.75" stop-color="#9a9a9a"/><stop offset="1" stop-color="#555"/></linearGradient></defs><rect x="0.5" y="9.5" width="16" height="7" rx="2" fill="url(#gp)" stroke="#777"/><circle cx="12.5" cy="12.3" r="0.8" fill="#2a2"/><circle cx="14.4" cy="12.3" r="0.8" fill="#2a2"/><circle cx="8.1" cy="9.5" r="3.2" fill="#f0f0f0" fill-opacity="0.8" stroke="#555" stroke-width="1.1"/><path d="M10.4 11.8L14.8 15.8" stroke="#e8a010" stroke-width="2.2"/></svg>
<svg style="position:absolute;left:404px;top:498px" width="9" height="15" viewBox="0 0 9 15"><path d="M6.5 4V11.5A2.5 2.5 0 0 1 1.5 11.5V3A2 2 0 0 1 5.5 3V10.5A1 1 0 0 1 3.5 10.5V5" fill="none" stroke="#3f6d9c" stroke-width="1.2"/></svg>
<div class="t" style="left:422px;top:498px;">Attach Document to Event</div>
<svg style="position:absolute;left:571px;top:497px" width="16" height="15" viewBox="0 0 16 15"><rect x="0.5" y="0.5" width="15" height="14" fill="#fff" stroke="#5b9a3c"/><rect x="1" y="1" width="14" height="1" fill="#5b9a3c"/><g stroke="#b9dba0" stroke-width="1"><path d="M5.5 3V14M10.5 3V14M1 6.5H15M1 10.5H15"/></g></svg>
<svg style="position:absolute;left:1527px;top:500px" width="11" height="10" viewBox="0 0 11 10"><path d="M1 0.5L5.5 4.5L10 0.5M1 5L5.5 9L10 5" fill="none" stroke="#333" stroke-width="1.1"/></svg>
<svg style="position:absolute;left:1547px;top:500px" width="10" height="9" viewBox="0 0 10 9"><rect x="0.5" y="0.5" width="9" height="8" fill="none" stroke="#000" stroke-width="1.1"/><rect x="0" y="0" width="10" height="2" fill="#000"/></svg>
<div style="position:absolute;left:4px;top:521px;width:1534px;height:160px;border:2px solid #5eaaf6;border-bottom:none;background:#fff;"></div>
<div style="position:absolute;left:6px;top:523px;width:922px;height:35px;background:linear-gradient(to bottom,#ffffff,#ebebeb);border-bottom:1px solid #d5d5d5;"></div>
<div style="position:absolute;left:27px;top:523px;width:1px;height:35px;background:linear-gradient(to bottom,#ffffff,#c9c9c9);"></div>
<div style="position:absolute;left:156px;top:523px;width:1px;height:35px;background:linear-gradient(to bottom,#ffffff,#c9c9c9);"></div>
<div style="position:absolute;left:308px;top:523px;width:1px;height:35px;background:linear-gradient(to bottom,#ffffff,#c9c9c9);"></div>
<div style="position:absolute;left:377px;top:523px;width:1px;height:35px;background:linear-gradient(to bottom,#ffffff,#c9c9c9);"></div>
<div style="position:absolute;left:492px;top:523px;width:1px;height:35px;background:linear-gradient(to bottom,#ffffff,#c9c9c9);"></div>
<div style="position:absolute;left:685px;top:523px;width:1px;height:35px;background:linear-gradient(to bottom,#ffffff,#c9c9c9);"></div>
<div style="position:absolute;left:790px;top:523px;width:1px;height:35px;background:linear-gradient(to bottom,#ffffff,#c9c9c9);"></div>
<div style="position:absolute;left:844px;top:523px;width:1px;height:35px;background:linear-gradient(to bottom,#ffffff,#c9c9c9);"></div>
<div style="position:absolute;left:928px;top:523px;width:1px;height:35px;background:linear-gradient(to bottom,#ffffff,#c9c9c9);"></div>
<svg style="position:absolute;left:13px;top:537px" width="8" height="5" viewBox="0 0 8 5"><path d="M0 5L4 0L8 5Z" fill="#111"/></svg>
<div class="t" style="left:30px;top:527px;line-height:15px;height:30px">Description</div>
<div class="t" style="left:159px;top:527px;line-height:15px;height:30px">Result</div>
<div class="t" style="left:311px;top:527px;line-height:15px;height:30px">Employee<br>No.</div>
<div class="t" style="left:380px;top:527px;line-height:15px;height:30px">Employee Name</div>
<div class="t" style="left:495px;top:527px;line-height:15px;height:30px">Notes</div>
<div class="t" style="left:688px;top:527px;line-height:15px;height:30px">Planned Starting<br>Date</div>
<div class="t" style="left:793px;top:527px;line-height:15px;height:30px">Closed</div>
<div class="t" style="left:847px;top:527px;line-height:15px;height:30px">Date Closed</div>
<div style="position:absolute;left:6px;top:559px;width:21px;height:120px;background:#ffffff;"></div>
<div style="position:absolute;left:27px;top:559px;width:1px;height:120px;background:#d3d3d3;"></div>
<div style="position:absolute;left:6px;top:558px;width:922px;height:21px;background:#d5e8fb;border-top:1px solid #62adf5;border-bottom:1px solid #62adf5;"></div>
<div style="position:absolute;left:6px;top:559px;width:21px;height:19px;background:linear-gradient(to bottom,#e9f3fd,#c9def4);"></div>
<div style="position:absolute;left:378px;top:559px;width:114px;height:19px;background:#c3d7ef;"></div>
<div style="position:absolute;left:845px;top:559px;width:83px;height:19px;background:#c3d7ef;"></div>
<div style="position:absolute;left:27px;top:559px;width:1px;height:19px;background:#62adf5;"></div>
<div style="position:absolute;left:156px;top:559px;width:1px;height:19px;background:#62adf5;"></div>
<div style="position:absolute;left:308px;top:559px;width:1px;height:19px;background:#62adf5;"></div>
<div style="position:absolute;left:377px;top:559px;width:1px;height:19px;background:#62adf5;"></div>
<div style="position:absolute;left:492px;top:559px;width:1px;height:19px;background:#62adf5;"></div>
<div style="position:absolute;left:685px;top:559px;width:1px;height:19px;background:#62adf5;"></div>
<div style="position:absolute;left:790px;top:559px;width:1px;height:19px;background:#62adf5;"></div>
<div style="position:absolute;left:844px;top:559px;width:1px;height:19px;background:#62adf5;"></div>
<div style="position:absolute;left:928px;top:559px;width:1px;height:19px;background:#62adf5;"></div>
<div class="t" style="left:12px;top:562px;">1</div>
<div style="position:absolute;left:27px;top:558px;width:130px;height:21px;border:2px solid #000;background:#fff;"></div>
<div class="t" style="left:31px;top:562px;">Follow up call</div>
<div style="position:absolute;left:104px;top:562px;width:1px;height:14px;background:#000;"></div>
<svg style="position:absolute;left:297px;top:566px" width="8" height="5" viewBox="0 0 8 5"><path d="M0 0H8L4 5Z" fill="#111"/></svg>
<svg style="position:absolute;left:346px;top:564px" width="7" height="7" viewBox="0 0 7 7"><path d="M3.5 0V7M0.3 2.2L6.7 4.8M6.7 2.2L0.3 4.8" stroke="#e01010" stroke-width="1.6"/></svg>
<svg style="position:absolute;left:361px;top:563px" width="12" height="11" viewBox="0 0 12 11"><circle cx="4.5" cy="4.5" r="3.5" fill="none" stroke="#aaa" stroke-width="1.2"/><path d="M7 7L11 10.5" stroke="#aaa" stroke-width="1.8"/></svg>
<div class="t" style="left:689px;top:562px;letter-spacing:-0.3px">4/5/2014</div>
<svg style="position:absolute;left:778px;top:566px" width="8" height="5" viewBox="0 0 8 5"><path d="M0 0H8L4 5Z" fill="#111"/></svg>
<div style="position:absolute;left:811px;top:562px;width:13px;height:13px;border:1px solid #8e8f8f;background:#fff;"><div style="position:absolute;left:1px;top:1px;width:9px;height:9px;border:1px solid #c0c4cc;background:linear-gradient(135deg,#d8dbe2,#f8f8f8);"></div></div>
<div style="position:absolute;left:6px;top:579px;width:21px;height:20px;border-bottom:1px solid #d3d3d3;background:#fff;"></div>
<div style="position:absolute;left:28px;top:579px;width:129px;height:20px;background:#fff;border-right:1px solid #d3d3d3;border-bottom:1px solid #d3d3d3;"></div>
<div style="position:absolute;left:157px;top:579px;width:152px;height:20px;background:#fff;border-right:1px solid #d3d3d3;border-bottom:1px solid #d3d3d3;"></div>
<div style="position:absolute;left:309px;top:579px;width:69px;height:20px;background:#fff;border-right:1px solid #d3d3d3;border-bottom:1px solid #d3d3d3;"></div>
<div style="position:absolute;left:378px;top:579px;width:115px;height:20px;background:#e6e6e6;border-right:1px solid #d3d3d3;border-bottom:1px solid #d3d3d3;"></div>
<div style="position:absolute;left:493px;top:579px;width:193px;height:20px;background:#fff;border-right:1px solid #d3d3d3;border-bottom:1px solid #d3d3d3;"></div>
<div style="position:absolute;left:686px;top:579px;width:105px;height:20px;background:#fff;border-right:1px solid #d3d3d3;border-bottom:1px solid #d3d3d3;"></div>
<div style="position:absolute;left:791px;top:579px;width:54px;height:20px;background:#fff;border-right:1px solid #d3d3d3;border-bottom:1px solid #d3d3d3;"></div>
<div style="position:absolute;left:845px;top:579px;width:84px;height:20px;background:#e6e6e6;border-right:1px solid #d3d3d3;border-bottom:1px solid #d3d3d3;"></div>
<div class="t" style="left:12px;top:582px;">2</div>
<div class="t" style="left:31px;top:582px;">Send Invoice Copy</div>
<div class="t" style="left:160px;top:582px;">Email</div>
<div class="t" style="left:312px;top:582px;letter-spacing:-0.4px">1001</div>
<div class="t" style="left:381px;top:582px;">Sean Williams</div>
<div class="t" style="left:496px;top:582px;letter-spacing:-0.1px">Emailed invoice detail (attached)</div>
<div class="t" style="left:689px;top:582px;letter-spacing:-0.3px">4/1/2014</div>
<div style="position:absolute;left:811px;top:582px;width:13px;height:13px;border:1px solid #8e8f8f;background:#fff;"><div style="position:absolute;left:1px;top:1px;width:9px;height:9px;border:1px solid #c0c4cc;background:linear-gradient(135deg,#d8dbe2,#f8f8f8);"></div></div>
<svg style="position:absolute;left:813px;top:584px" width="9" height="9" viewBox="0 0 9 9"><path d="M1 4.5L3.5 7.5L8 1" fill="none" stroke="#2a4c8c" stroke-width="1.6"/></svg>
<div class="t" style="left:848px;top:582px;letter-spacing:-0.3px">4/4/2014</div>
<div style="position:absolute;left:6px;top:599px;width:21px;height:20px;border-bottom:1px solid #d3d3d3;background:#fff;"></div>
<div style="position:absolute;left:28px;top:599px;width:129px;height:20px;background:#fff;border-right:1px solid #d3d3d3;border-bottom:1px solid #d3d3d3;"></div>
<div style="position:absolute;left:157px;top:599px;width:152px;height:20px;background:#fff;border-right:1px solid #d3d3d3;border-bottom:1px solid #d3d3d3;"></div>
<div style="position:absolute;left:309px;top:599px;width:69px;height:20px;background:#fff;border-right:1px solid #d3d3d3;border-bottom:1px solid #d3d3d3;"></div>
<div style="position:absolute;left:378px;top:599px;width:115px;height:20px;background:#e6e6e6;border-right:1px solid #d3d3d3;border-bottom:1px solid #d3d3d3;"></div>
<div style="position:absolute;left:493px;top:599px;width:193px;height:20px;background:#fff;border-right:1px solid #d3d3d3;border-bottom:1px solid #d3d3d3;"></div>
<div style="position:absolute;left:686px;top:599px;width:105px;height:20px;background:#fff;border-right:1px solid #d3d3d3;border-bottom:1px solid #d3d3d3;"></div>
<div style="position:absolute;left:791px;top:599px;width:54px;height:20px;background:#fff;border-right:1px solid #d3d3d3;border-bottom:1px solid #d3d3d3;"></div>
<div style="position:absolute;left:845px;top:599px;width:84px;height:20px;background:#e6e6e6;border-right:1px solid #d3d3d3;border-bottom:1px solid #d3d3d3;"></div>
<div class="t" style="left:12px;top:602px;">3</div>
<div class="t" style="left:31px;top:602px;">Call Back</div>
<div class="t" style="left:160px;top:602px;">Invoice Copy Requested</div>
<div class="t" style="left:312px;top:602px;letter-spacing:-0.4px">1004</div>
<div class="t" style="left:381px;top:602px;">Fay Miller</div>
<div class="t" style="left:496px;top:602px;letter-spacing:-0.1px">Sent invoice copy today</div>
<div class="t" style="left:689px;top:602px;letter-spacing:-0.3px">4/2/2014</div>
<div style="position:absolute;left:811px;top:602px;width:13px;height:13px;border:1px solid #8e8f8f;background:#fff;"><div style="position:absolute;left:1px;top:1px;width:9px;height:9px;border:1px solid #c0c4cc;background:linear-gradient(135deg,#d8dbe2,#f8f8f8);"></div></div>
<svg style="position:absolute;left:813px;top:604px" width="9" height="9" viewBox="0 0 9 9"><path d="M1 4.5L3.5 7.5L8 1" fill="none" stroke="#2a4c8c" stroke-width="1.6"/></svg>
<div class="t" style="left:848px;top:602px;letter-spacing:-0.3px">3/31/2014</div>
<div style="position:absolute;left:6px;top:619px;width:21px;height:20px;border-bottom:1px solid #d3d3d3;background:#fff;"></div>
<div style="position:absolute;left:28px;top:619px;width:129px;height:20px;background:#fff;border-right:1px solid #d3d3d3;border-bottom:1px solid #d3d3d3;"></div>
<div style="position:absolute;left:157px;top:619px;width:152px;height:20px;background:#fff;border-right:1px solid #d3d3d3;border-bottom:1px solid #d3d3d3;"></div>
<div style="position:absolute;left:309px;top:619px;width:69px;height:20px;background:#fff;border-right:1px solid #d3d3d3;border-bottom:1px solid #d3d3d3;"></div>
<div style="position:absolute;left:378px;top:619px;width:115px;height:20px;background:#e6e6e6;border-right:1px solid #d3d3d3;border-bottom:1px solid #d3d3d3;"></div>
<div style="position:absolute;left:493px;top:619px;width:193px;height:20px;background:#fff;border-right:1px solid #d3d3d3;border-bottom:1px solid #d3d3d3;"></div>
<div style="position:absolute;left:686px;top:619px;width:105px;height:20px;background:#fff;border-right:1px solid #d3d3d3;border-bottom:1px solid #d3d3d3;"></div>
<div style="position:absolute;left:791px;top:619px;width:54px;height:20px;background:#fff;border-right:1px solid #d3d3d3;border-bottom:1px solid #d3d3d3;"></div>
<div style="position:absolute;left:845px;top:619px;width:84px;height:20px;background:#e6e6e6;border-right:1px solid #d3d3d3;border-bottom:1px solid #d3d3d3;"></div>
<div class="t" style="left:12px;top:622px;">4</div>
<div class="t" style="left:31px;top:622px;">First Call</div>
<div class="t" style="left:160px;top:622px;">Call Back</div>
<div class="t" style="left:312px;top:622px;letter-spacing:-0.4px">1001</div>
<div class="t" style="left:381px;top:622px;">Sean Williams</div>
<div class="t" style="left:496px;top:622px;letter-spacing:-0.1px">Tried to call at 9AM EST</div>
<div class="t" style="left:689px;top:622px;letter-spacing:-0.3px">4/1/2014</div>
<div style="position:absolute;left:811px;top:622px;width:13px;height:13px;border:1px solid #8e8f8f;background:#fff;"><div style="position:absolute;left:1px;top:1px;width:9px;height:9px;border:1px solid #c0c4cc;background:linear-gradient(135deg,#d8dbe2,#f8f8f8);"></div></div>
<svg style="position:absolute;left:813px;top:624px" width="9" height="9" viewBox="0 0 9 9"><path d="M1 4.5L3.5 7.5L8 1" fill="none" stroke="#2a4c8c" stroke-width="1.6"/></svg>
<div class="t" style="left:848px;top:622px;letter-spacing:-0.3px">3/31/2014</div>
<div style="position:absolute;left:6px;top:639px;width:21px;height:20px;border-bottom:1px solid #d3d3d3;background:#fff;"></div>
<div style="position:absolute;left:28px;top:639px;width:129px;height:20px;background:#fff;border-right:1px solid #d3d3d3;border-bottom:1px solid #d3d3d3;"></div>
<div style="position:absolute;left:157px;top:639px;width:152px;height:20px;background:#fff;border-right:1px solid #d3d3d3;border-bottom:1px solid #d3d3d3;"></div>
<div style="position:absolute;left:309px;top:639px;width:69px;height:20px;background:#fff;border-right:1px solid #d3d3d3;border-bottom:1px solid #d3d3d3;"></div>
<div style="position:absolute;left:378px;top:639px;width:115px;height:20px;background:#fff;border-right:1px solid #d3d3d3;border-bottom:1px solid #d3d3d3;"></div>
<div style="position:absolute;left:493px;top:639px;width:193px;height:20px;background:#fff;border-right:1px solid #d3d3d3;border-bottom:1px solid #d3d3d3;"></div>
<div style="position:absolute;left:686px;top:639px;width:105px;height:20px;background:#fff;border-right:1px solid #d3d3d3;border-bottom:1px solid #d3d3d3;"></div>
<div style="position:absolute;left:791px;top:639px;width:54px;height:20px;background:#fff;border-right:1px solid #d3d3d3;border-bottom:1px solid #d3d3d3;"></div>
<div style="position:absolute;left:845px;top:639px;width:84px;height:20px;background:#fff;border-right:1px solid #d3d3d3;border-bottom:1px solid #d3d3d3;"></div>
<div style="position:absolute;left:1537px;top:521px;width:29px;height:160px;background:#f3f3f3;"></div>
<div style="position:absolute;left:1542px;top:526px;width:24px;height:155px;border:1px solid #6784a2;border-right:none;border-bottom:none;border-radius:4px 0 0 0;background:linear-gradient(to right,#ffffff 0px,#f2f2f2 8px,#e4e4e4 9px,#e2e2e2 100%);"></div>
<svg style="position:absolute;left:1550px;top:544px" width="9" height="9" viewBox="0 0 9 9"><path d="M4.5 0.5L1 4.5L4.5 8.5M8.5 0.5L5 4.5L8.5 8.5" fill="none" stroke="#444" stroke-width="1"/></svg>
<div class="t" style="left:1525px;top:582px;font-weight:bold;color:#0a1838;transform:rotate(90deg);transform-origin:center center;width:64px;font-size:12px;letter-spacing:-0.2px">Documents</div>
</body></html>
